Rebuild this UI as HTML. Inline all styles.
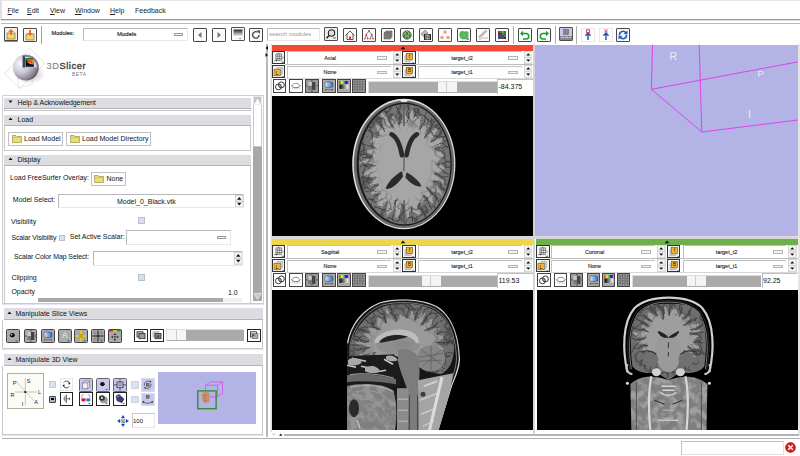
<!DOCTYPE html>
<html><head><meta charset="utf-8">
<style>
*{margin:0;padding:0;box-sizing:border-box}
html,body{width:800px;height:456px;overflow:hidden;background:#fff;font-family:"Liberation Sans",sans-serif;color:#000}
.a{position:absolute}
.t{position:absolute;font-size:7px;white-space:nowrap;line-height:1}
.btn{position:absolute;width:14px;height:14px;border:1px solid #222;background:#f4f4f4}
.hdr{position:absolute;background:#dddde1;border-bottom:1px solid #b4b4b8}
.frm{position:absolute;border:1px solid #c8c8c8;background:#fff}
.combo{position:absolute;border:1px solid #b8b8b8;border-right-color:#e8e8e8;border-bottom-color:#e8e8e8;background:#fff}
.hdl{position:absolute;width:9px;height:3.4px;border:0.8px solid #999;background:#f4f4f4;border-radius:0.5px}
.spin{position:absolute;width:7px}
.black{position:absolute;background:#000}
</style></head><body>
<!-- window borders -->
<div class="a" style="left:0;top:0;width:800px;height:1px;background:#e6e6e6"></div>
<div class="a" style="left:0;top:0;width:1.5px;height:20px;background:#e0e0e0"></div>
<!-- menu -->
<div class="t" style="left:7.5px;top:6.5px;color:#222"><u style="text-decoration-thickness:0.5px;text-underline-offset:1px">F</u>ile</div>
<div class="t" style="left:27px;top:6.5px;color:#222"><u style="text-decoration-thickness:0.5px;text-underline-offset:1px">E</u>dit</div>
<div class="t" style="left:50px;top:6.5px;color:#222"><u style="text-decoration-thickness:0.5px;text-underline-offset:1px">V</u>iew</div>
<div class="t" style="left:75px;top:6.5px;color:#222"><u style="text-decoration-thickness:0.5px;text-underline-offset:1px">W</u>indow</div>
<div class="t" style="left:110px;top:6.5px;color:#222"><u style="text-decoration-thickness:0.5px;text-underline-offset:1px">H</u>elp</div>
<div class="t" style="left:135px;top:6.5px;color:#222">Feedback</div>
<div class="a" style="left:1px;top:19px;width:799px;height:1px;background:#9a9a9a"></div>
<div class="a" style="left:1px;top:20px;width:799px;height:1px;background:#dcdcdc"></div>
<div class="a" style="left:1px;top:23px;width:799px;height:1px;background:#b8b8b8"></div>


<!-- toolbar -->
<div class="a" style="left:4px;top:27px;width:14px;height:14px;border:1px solid #484848;border-radius:1px;background:#f0f0f0;box-shadow:0 1px 0 #888"><svg width="12" height="12" viewBox="0 0 12 12" style="position:absolute;left:0;top:0"><rect x="2" y="5" width="8" height="6" fill="#f2d77a" stroke="#8a7030" stroke-width="0.7"/><path d="M6 1 L9 4 H7 V7 H5 V4 H3 Z" fill="#f07020"/></svg></div>
<div class="a" style="left:23px;top:28px;width:14px;height:14px;border:1px solid #484848;border-radius:1px;background:#f8f8f8"><svg width="12" height="12" viewBox="0 0 12 12" style="position:absolute;left:0;top:0"><rect x="2" y="5" width="8" height="6" fill="#f2d77a" stroke="#8a7030" stroke-width="0.7"/><path d="M6 7 L9 4 H7 V1 H5 V4 H3 Z" fill="#f07020"/></svg></div>
<div class="a" style="left:40.5px;top:25.5px;width:1px;height:18px;background:#a0a0a0"></div>
<div class="t" style="left:51.5px;top:31.3px;font-size:5.6px;color:#222;-webkit-text-stroke:0.15px #222">Modules:</div>
<div class="combo" style="left:82.5px;top:27.5px;width:105px;height:13.5px"></div>
<div class="t" style="left:117px;top:31px;font-size:6px;color:#222;-webkit-text-stroke:0.15px #222">Models</div>
<div class="hdl" style="left:174px;top:33px"></div>
<div class="a" style="left:193px;top:28px;width:14px;height:14px;border:1px solid #484848;border-radius:1px;background:#fafafa"><svg width="12" height="12" viewBox="0 0 12 12" style="position:absolute;left:0;top:0"><path d="M7.5 3 L4 6 L7.5 9 Z" fill="#777"/></svg></div>
<div class="a" style="left:212px;top:28px;width:14px;height:14px;border:1px solid #484848;border-radius:1px;background:#fafafa"><svg width="12" height="12" viewBox="0 0 12 12" style="position:absolute;left:0;top:0"><path d="M4.5 3 L8 6 L4.5 9 Z" fill="#777"/></svg></div>
<div class="a" style="left:230.5px;top:27.3px;width:14px;height:14px;border:1px solid #505050;border-radius:1px;background:#fafafa"><svg width="12" height="12" viewBox="0 0 12 12" style="position:absolute;left:0;top:0"><defs><linearGradient id="g1" x1="0" y1="0" x2="0" y2="1"><stop offset="0" stop-color="#222"/><stop offset="1" stop-color="#fff"/></linearGradient></defs><rect x="1.5" y="1.5" width="9" height="7" fill="url(#g1)"/><path d="M7 10 L9 10 L8 11 Z" fill="#333"/></svg></div>
<div class="a" style="left:249px;top:28px;width:14px;height:14px;border:1px solid #484848;border-radius:1px;background:#fafafa"><svg width="12" height="12" viewBox="0 0 12 12" style="position:absolute;left:0;top:0"><path d="M9 6 A3.2 3.2 0 1 1 7.5 3.2" fill="none" stroke="#444" stroke-width="1.3"/><path d="M6.5 1.5 L10 1.5 L10 5 Z" fill="#444"/></svg></div>
<div class="combo" style="left:267px;top:27.5px;width:52.5px;height:13.5px"></div><div class="t" style="left:269px;top:31px;font-size:6px;color:#9a9a9a">search modules</div>
<div class="a" style="left:324px;top:27.3px;width:14px;height:14px;border:1px solid #505050;border-radius:1px;background:#f0f0f0"><svg width="12" height="12" viewBox="0 0 12 12" style="position:absolute;left:0;top:0"><circle cx="6.5" cy="5" r="3.2" fill="#ddd" stroke="#222" stroke-width="1.1"/><path d="M4.3 7.3 L1.5 10.2" stroke="#222" stroke-width="1.6"/><path d="M8 10 H11" stroke="#444" stroke-width="0.8"/></svg></div>
<div class="a" style="left:343px;top:28px;width:14px;height:14px;border:1px solid #484848;border-radius:1px;background:#fafafa"><svg width="12" height="12" viewBox="0 0 12 12" style="position:absolute;left:0;top:0"><path d="M1.5 6.5 L6 2 L10.5 6.5 M3 5 V10.5 H9 V5" fill="none" stroke="#333" stroke-width="0.8"/><rect x="5.2" y="7.5" width="1.8" height="3" fill="#e02010"/></svg></div>
<div class="a" style="left:362px;top:28px;width:14px;height:14px;border:1px solid #484848;border-radius:1px;background:#fafafa"><svg width="12" height="12" viewBox="0 0 12 12" style="position:absolute;left:0;top:0"><path d="M6 1.8 L3.2 5.8 L1.8 9.8 M3.2 5.8 L4.8 9.8 M6 1.8 L8.8 5.8 L7.2 9.8 M8.8 5.8 L10.2 9.8" fill="none" stroke="#444" stroke-width="0.6"/><g fill="#c01a10"><circle cx="6" cy="1.8" r="0.7"/><circle cx="3.2" cy="5.8" r="0.7"/><circle cx="8.8" cy="5.8" r="0.7"/><circle cx="1.8" cy="9.8" r="0.7"/><circle cx="4.8" cy="9.8" r="0.7"/><circle cx="7.2" cy="9.8" r="0.7"/><circle cx="10.2" cy="9.8" r="0.7"/></g></svg></div>
<div class="a" style="left:381px;top:28px;width:14px;height:14px;border:1px solid #484848;border-radius:1px;background:#fafafa"><svg width="12" height="12" viewBox="0 0 12 12" style="position:absolute;left:0;top:0"><path d="M2 4 L4 2 H10 V8 L8 10 H2 Z" fill="#999" stroke="#444" stroke-width="0.5"/><path d="M2 4 H8 V10 M8 4 L10 2" stroke="#333" stroke-width="0.5" fill="none"/><path d="M4 4 V10 M6 4 V10 M2 6 H8 M2 8 H8 M8 6 L10 4 M8 8 L10 6 M4 4 L6 2 M6 4 L8 2" stroke="#444" stroke-width="0.4"/></svg></div>
<div class="a" style="left:400px;top:28px;width:14px;height:14px;border:1px solid #484848;border-radius:1px;background:#fafafa"><svg width="12" height="12" viewBox="0 0 12 12" style="position:absolute;left:0;top:0"><circle cx="6" cy="6" r="4.3" fill="#4a7a40" stroke="#2a4a25" stroke-width="0.5"/><path d="M6 2 L8 4 L7 7 L5 7 L4 4 Z M2 6 L4 4 M10 6 L8 4 M5 7 L4 9.5 M7 7 L8 9.5" fill="none" stroke="#b8e0a8" stroke-width="0.6"/></svg></div>
<div class="a" style="left:419px;top:28px;width:14px;height:14px;border:1px solid #484848;border-radius:1px;background:#fafafa"><svg width="12" height="12" viewBox="0 0 12 12" style="position:absolute;left:0;top:0"><path d="M1 5 L5 1 L8 4 L4 8 Z" fill="#bbb" stroke="#555" stroke-width="0.5"/><rect x="4" y="5" width="7" height="6" fill="#222"/><path d="M5 6.5 H10 M5 8 H10 M5 9.5 H10 M6 5 V11 M7.5 5 V11 M9 5 V11" stroke="#ddd" stroke-width="0.5"/></svg></div>
<div class="a" style="left:437.5px;top:28px;width:14px;height:14px;border:1px solid #484848;border-radius:1px;background:#fafafa"><svg width="12" height="12" viewBox="0 0 12 12" style="position:absolute;left:0;top:0"><path d="M8.00 3.00 L4.00 3.00 M7.41 4.41 L4.59 1.59 M6.00 5.00 L6.00 1.00 M4.59 4.41 L7.41 1.59 M5.00 8.50 L1.00 8.50 M4.41 9.91 L1.59 7.09 M3.00 10.50 L3.00 6.50 M1.59 9.91 L4.41 7.09 M11.00 8.50 L7.00 8.50 M10.41 9.91 L7.59 7.09 M9.00 10.50 L9.00 6.50 M7.59 9.91 L10.41 7.09 " stroke="#f07a60" stroke-width="0.5" fill="none"/><g fill="none" stroke="#f07a60" stroke-width="0.4"><circle cx="6" cy="3" r="1"/><circle cx="3" cy="8.5" r="1"/><circle cx="9" cy="8.5" r="1"/></g></svg></div>
<div class="a" style="left:457px;top:28px;width:14px;height:14px;border:1px solid #484848;border-radius:1px;background:#fafafa"><svg width="12" height="12" viewBox="0 0 12 12" style="position:absolute;left:0;top:0"><path d="M2 4 C2 2 5 1.5 7 3 C9 1.5 11 3 10 5.5 C11 8 9 10.5 6 10 C3 10.5 1 8 2 4 Z" fill="#5cb85c" stroke="#2c8a30" stroke-width="0.4"/><path d="M8.5 10 H11" stroke="#333" stroke-width="1"/></svg></div>
<div class="a" style="left:476px;top:28px;width:14px;height:14px;border:1px solid #484848;border-radius:1px;background:#fafafa"><svg width="12" height="12" viewBox="0 0 12 12" style="position:absolute;left:0;top:0"><path d="M2 8.5 L9.5 1.5" stroke="#999" stroke-width="2"/><path d="M2 8.5 L9.5 1.5" stroke="#fff" stroke-width="0.6"/><path d="M2 10 C4 11 5 8 6.5 9 C8 10 9 8 11 9" fill="none" stroke="#f06080" stroke-width="0.6"/></svg></div>
<div class="a" style="left:495px;top:28px;width:14px;height:14px;border:1px solid #484848;border-radius:1px;background:#fafafa"><svg width="12" height="12" viewBox="0 0 12 12" style="position:absolute;left:0;top:0"><rect x="2" y="2" width="8" height="8" fill="#333"/><g opacity="0.9"><rect x="2" y="2" width="2" height="2" fill="#c02020"/><rect x="4" y="2" width="2" height="2" fill="#30a030"/><rect x="6" y="2" width="2" height="2" fill="#a0a020"/><rect x="8" y="2" width="2" height="2" fill="#208080"/><rect x="2" y="4" width="2" height="2" fill="#8020a0"/><rect x="4" y="4" width="2" height="2" fill="#2040c0"/><rect x="6" y="4" width="2" height="2" fill="#40a040"/><rect x="8" y="4" width="2" height="2" fill="#a04060"/><rect x="2" y="6" width="2" height="2" fill="#206060"/><rect x="4" y="6" width="2" height="2" fill="#a02080"/><rect x="6" y="6" width="2" height="2" fill="#2060a0"/><rect x="8" y="6" width="2" height="2" fill="#608020"/><rect x="2" y="8" width="2" height="2" fill="#4040a0"/><rect x="4" y="8" width="2" height="2" fill="#108040"/><rect x="6" y="8" width="2" height="2" fill="#a03030"/><rect x="8" y="8" width="2" height="2" fill="#303080"/></g></svg></div>
<div class="a" style="left:512.5px;top:25.5px;width:1px;height:18px;background:#b0b0b0"></div>
<div class="a" style="left:517.5px;top:28px;width:14px;height:14px;border:1px solid #484848;border-radius:1px;background:#fafafa"><svg width="12" height="12" viewBox="0 0 12 12" style="position:absolute;left:0;top:0"><path d="M3 4.5 H7 A2.7 2.7 0 0 1 7 10 H4" fill="none" stroke="#1aa02a" stroke-width="1.5"/><path d="M1 4.5 L4 1.8 L4 7.2 Z" fill="#1aa02a"/></svg></div>
<div class="a" style="left:537px;top:28px;width:14px;height:14px;border:1px solid #484848;border-radius:1px;background:#fafafa"><svg width="12" height="12" viewBox="0 0 12 12" style="position:absolute;left:0;top:0"><path d="M9 4.5 H5 A2.7 2.7 0 0 0 5 10 H8" fill="none" stroke="#1aa02a" stroke-width="1.5"/><path d="M11 4.5 L8 1.8 L8 7.2 Z" fill="#1aa02a"/></svg></div>
<div class="a" style="left:555px;top:25.5px;width:1px;height:18px;background:#b0b0b0"></div>
<div class="a" style="left:559px;top:27.3px;width:14px;height:14px;border:1px solid #505050;border-radius:1px;background:#c8c8ee"><svg width="12" height="12" viewBox="0 0 12 12" style="position:absolute;left:0;top:0"><rect x="0" y="0" width="12" height="8" fill="#c8c8ee"/><rect x="3.5" y="1.5" width="5" height="5" fill="#888" stroke="#555" stroke-width="0.5"/><rect x="0" y="8" width="12" height="4" fill="#888"/><path d="M1 9.5 H4 M5 9.5 H8 M9 9.5 H11" stroke="#eee" stroke-width="0.7"/></svg></div>
<div class="a" style="left:576px;top:25.5px;width:1px;height:18px;background:#b0b0b0"></div>
<div class="a" style="left:580.5px;top:28px;width:14px;height:14px;border:1px solid #e8e8e8;background:#fff"><svg width="12" height="12" viewBox="0 0 12 12" style="position:absolute;left:0;top:0"><path d="M6 4 V11 M3.5 6.8 L6 4 L8.5 6.8" fill="none" stroke="#1a50b0" stroke-width="1.4"/><rect x="4.5" y="0.8" width="3" height="2.6" fill="none" stroke="#e02020" stroke-width="0.8"/></svg></div>
<div class="a" style="left:598.5px;top:28px;width:14px;height:14px;border:1px solid #e8e8e8;background:#fff"><svg width="12" height="12" viewBox="0 0 12 12" style="position:absolute;left:0;top:0"><path d="M6 4 V11 M3.5 6.8 L6 4 L8.5 6.8" fill="none" stroke="#1a50b0" stroke-width="1.4"/><path d="M4 0.5 L8 3.5 M8 0.5 L4 3.5 M6 0.3 V3.5" stroke="#f03030" stroke-width="0.6"/></svg></div>
<div class="a" style="left:616px;top:28px;width:14px;height:14px;border:1px solid #484848;border-radius:1px;background:#fafafa"><svg width="12" height="12" viewBox="0 0 12 12" style="position:absolute;left:0;top:0"><path d="M2.5 6 A3.5 3.5 0 0 1 9 4" fill="none" stroke="#1a5ec0" stroke-width="1.6"/><path d="M9.5 6 A3.5 3.5 0 0 1 3 8" fill="none" stroke="#1a5ec0" stroke-width="1.6"/><path d="M10.5 1.5 L10.5 5.5 L6.5 5 Z" fill="#1a5ec0"/><path d="M1.5 10.5 L1.5 6.5 L5.5 7 Z" fill="#1a5ec0"/></svg></div>


<!-- logo -->
<svg class="a" style="left:0;top:44px" width="50" height="52" viewBox="0 44 50 52">
<defs>
<radialGradient id="sph" cx="0.3" cy="0.35" r="0.8"><stop offset="0" stop-color="#f8f8fc"/><stop offset="0.45" stop-color="#c8c8d8"/><stop offset="0.8" stop-color="#8a8090"/><stop offset="1" stop-color="#4a3030"/></radialGradient>
<radialGradient id="shd" cx="0.5" cy="0.5" r="0.5"><stop offset="0" stop-color="#000" stop-opacity="0.3"/><stop offset="1" stop-color="#000" stop-opacity="0"/></radialGradient>
<linearGradient id="core" x1="0" y1="0" x2="1" y2="1"><stop offset="0" stop-color="#30a040"/><stop offset="0.4" stop-color="#e05020"/><stop offset="0.7" stop-color="#f0c020"/><stop offset="1" stop-color="#2050c0"/></linearGradient>
</defs>
<path d="M4.5 73.5 L29.5 48 L45 63 L20 88.5 Z" fill="none" stroke="#c8c8c8" stroke-width="0.5"/>
<path d="M18.5 88 L16 58 L30 53 L32.5 84 Z" fill="none" stroke="#d0d0d0" stroke-width="0.4"/>
<ellipse cx="30" cy="74" rx="15" ry="10" fill="url(#shd)"/>
<circle cx="25.8" cy="67.6" r="12.9" fill="url(#sph)"/>
<path d="M23.6 54.9 A12.9 12.9 0 0 1 38.7 67.6 L23.6 67.6 Z" fill="#7a8298"/><path d="M22.6 55 L25 56.8 V67.6 H22.6 Z" fill="#3c4458"/>
<path d="M25 56.8 A11 11 0 0 1 36.8 67.6 L25 67.6 Z" fill="#d8d8e4"/>
<path d="M25.5 58 L33 58.5 L34 66.8 L25.5 66.8 Z" fill="#111"/>
<path d="M26 58.5 L33 59 L33.5 65 L28 63 Z" fill="url(#core)"/>
<path d="M26 58.5 L29.5 58.7 L28 61.5 Z" fill="#20a030"/>
<path d="M29 61 L32.5 60.5 L32 64 Z" fill="#e84020"/>
</svg>
<div class="t" style="left:46.5px;top:61.7px;font-size:9.3px;color:#777;letter-spacing:0.55px">3D<span style="color:#3a3a3a;-webkit-text-stroke:0.35px #3a3a3a">Slicer</span></div>
<div class="t" style="left:72px;top:72.6px;font-size:4.8px;color:#777;letter-spacing:0.6px">BETA</div>

<!-- left panel outer frame -->
<div class="a" style="left:2px;top:94.5px;width:262px;height:209px;border:1px solid #d0d0d0;border-bottom:1.5px solid #c8c8d8;background:#fff"></div>
<!-- help header -->
<div class="hdr" style="left:4px;top:98px;width:247px;height:11.2px"></div>
<div class="a" style="left:4px;top:109.2px;width:247px;height:2px;border:1px solid #c8c8c8;border-top:none"></div>
<div class="t" style="left:17.5px;top:99.3px;font-size:7px;color:#111;letter-spacing:-0.07px">Help &amp; Acknowledgement</div>
<svg class="a" style="left:8px;top:100px" width="5" height="4"><path d="M0.5 0.5 H4.5 L2.5 3 Z" fill="#111"/></svg>
<!-- load -->
<div class="hdr" style="left:4px;top:115px;width:247px;height:10.5px"></div>
<div class="t" style="left:17.5px;top:116.3px;font-size:7px;color:#111">Load</div>
<svg class="a" style="left:8px;top:117px" width="5" height="4"><path d="M0.5 3 H4.5 L2.5 0.5 Z" fill="#111"/></svg>
<div class="a" style="left:4px;top:125.5px;width:247px;height:25px;border:1px solid #c8c8c8;border-top:none"></div>
<div class="a" style="left:8px;top:131.5px;width:55px;height:14.5px;border:1px solid #c0c0c0;background:#fff"></div>
<div class="a" style="left:65.5px;top:131.5px;width:85px;height:14.5px;border:1px solid #c0c0c0;background:#fff"></div>
<svg class="a" style="left:11.5px;top:134px" width="10" height="9"><path d="M0.5 1.5 H4 L5 2.5 H9.5 V8.5 H0.5 Z" fill="#e8e070" stroke="#8a8040" stroke-width="0.6"/><path d="M0.5 3.5 H9.5" stroke="#b0a040" stroke-width="0.4"/></svg>
<div class="t" style="left:24px;top:135px;font-size:7px;color:#111">Load Model</div>
<svg class="a" style="left:69.5px;top:134px" width="10" height="9"><path d="M0.5 1.5 H4 L5 2.5 H9.5 V8.5 H0.5 Z" fill="#e8e070" stroke="#8a8040" stroke-width="0.6"/><path d="M0.5 3.5 H9.5" stroke="#b0a040" stroke-width="0.4"/></svg>
<div class="t" style="left:82px;top:135px;font-size:7px;color:#111">Load Model Directory</div>
<!-- display -->
<div class="hdr" style="left:4px;top:155px;width:247px;height:10.5px"></div>
<div class="t" style="left:17.5px;top:156.3px;font-size:7px;color:#111">Display</div>
<svg class="a" style="left:8px;top:157px" width="5" height="4"><path d="M0.5 3 H4.5 L2.5 0.5 Z" fill="#111"/></svg>
<div class="a" style="left:4px;top:165.5px;width:247px;height:137px;border:1px solid #c8c8c8;border-top:none;border-bottom:none"></div>
<div class="t" style="left:10px;top:173.7px;font-size:7px;color:#111">Load FreeSurfer Overlay:</div>
<div class="a" style="left:90.5px;top:171.5px;width:35.5px;height:14.5px;border:1px solid #c0c0c0;background:#fff"></div>
<svg class="a" style="left:94px;top:174px" width="10" height="9"><path d="M0.5 1.5 H4 L5 2.5 H9.5 V8.5 H0.5 Z" fill="#e8e070" stroke="#8a8040" stroke-width="0.6"/><path d="M0.5 3.5 H9.5" stroke="#b0a040" stroke-width="0.4"/></svg>
<div class="t" style="left:106.5px;top:174.5px;font-size:7px;color:#111">None</div>
<div class="t" style="left:12.8px;top:195.5px;font-size:7px;color:#111">Model Select:</div>
<div class="combo" style="left:57.5px;top:193.5px;width:186.5px;height:14.5px"></div>
<div class="t" style="left:117px;top:197.5px;font-size:7px;color:#111">Model_0_Black.vtk</div>
<div class="a" style="left:235px;top:194.5px;width:8.5px;height:12.5px;background:#e4e4e4"><svg width="8.5" height="12.5" style="position:absolute;left:0;top:0"><rect x="0.5" y="0.5" width="7.5" height="5.5" fill="#f8f8f8" stroke="#bbb" stroke-width="0.5"/><rect x="0.5" y="6.5" width="7.5" height="5.5" fill="#f8f8f8" stroke="#bbb" stroke-width="0.5"/><path d="M2 4.7 H6.5 L4.25 2 Z M2 7.8 H6.5 L4.25 10.5 Z" fill="#111"/></svg></div>
<div class="t" style="left:11px;top:217.6px;font-size:7px;color:#111">Visibility</div>
<div class="a" style="left:138px;top:217px;width:7px;height:7px;border:1px solid #b8c0d0;background:#d8e0f0"></div>
<div class="t" style="left:11.4px;top:233.5px;font-size:7px;color:#111;letter-spacing:-0.12px">Scalar Visibility</div>
<div class="a" style="left:58.5px;top:234.5px;width:6.5px;height:6.5px;border:1px solid #b8c0d0;background:#d8e0f0"></div>
<div class="t" style="left:69.8px;top:232.5px;font-size:7px;color:#111">Set Active Scalar:</div>
<div class="combo" style="left:125.5px;top:230px;width:105.5px;height:14.5px"></div>
<div class="hdl" style="left:216.5px;top:236px"></div>
<div class="t" style="left:14px;top:252.6px;font-size:7px;color:#111;letter-spacing:-0.1px">Scalar Color Map Select:</div>
<div class="combo" style="left:92.5px;top:251px;width:150px;height:14.5px"></div>
<div class="a" style="left:233.5px;top:252px;width:8.5px;height:12.5px;background:#e4e4e4"><svg width="8.5" height="12.5" style="position:absolute;left:0;top:0"><rect x="0.5" y="0.5" width="7.5" height="5.5" fill="#f8f8f8" stroke="#bbb" stroke-width="0.5"/><rect x="0.5" y="6.5" width="7.5" height="5.5" fill="#f8f8f8" stroke="#bbb" stroke-width="0.5"/><path d="M2 4.7 H6.5 L4.25 2 Z M2 7.8 H6.5 L4.25 10.5 Z" fill="#111"/></svg></div>
<div class="t" style="left:11.4px;top:273.6px;font-size:7px;color:#111">Clipping</div>
<div class="a" style="left:138px;top:273.5px;width:7px;height:7px;border:1px solid #b8c0d0;background:#d8e0f0"></div>
<div class="t" style="left:11.4px;top:287.6px;font-size:7px;color:#111">Opacity</div>
<div class="t" style="left:228px;top:289px;font-size:7px;color:#111">1.0</div>
<div class="a" style="left:37.5px;top:298px;width:204px;height:4px;background:#a8a8a8"></div>
<div class="a" style="left:223px;top:298px;width:19px;height:4px;background:#f0f0f0"></div>
<!-- scrollbar -->
<div class="a" style="left:252.5px;top:96px;width:9.5px;height:205px;background:#a8a8a8"></div>
<div class="a" style="left:252.5px;top:96px;width:9.5px;height:51px;background:#fff;border:1px solid #c8c8c8"></div>
<div class="a" style="left:252.5px;top:96px;width:9.5px;height:9px;background:#c4c4c4;border:0.5px solid #e8e8e8"></div><svg class="a" style="left:253px;top:96.5px" width="9" height="9"><path d="M1.5 7.3 H7.5 L4.5 1.8 Z" fill="#fff" stroke="#eee" stroke-width="0.5"/></svg>
<svg class="a" style="left:253px;top:292px" width="9" height="9"><path d="M1 1.5 H8 L4.5 7.5 Z" fill="#c8c8c8" stroke="#eee" stroke-width="0.7"/></svg>
<!-- splitter -->
<div class="a" style="left:266px;top:44px;width:1.8px;height:392.8px;background:#b8b8b8"></div>
<svg class="a" style="left:265px;top:46px" width="4" height="11"><path d="M3 0 V4 L0.5 2 Z M0.5 7 V11 L3 9 Z" fill="#111"/></svg>

<!-- manipulate slice views -->
<div class="a" style="left:2px;top:303.5px;width:262px;height:1.5px;background:#e4e4f4"></div>
<div class="hdr" style="left:4px;top:308px;width:259px;height:12px"></div>
<div class="t" style="left:15.5px;top:309.5px;font-size:7px;color:#111">Manipulate Slice Views</div>
<svg class="a" style="left:7px;top:311px" width="5" height="4"><path d="M0.5 3 H4.5 L2.5 0.5 Z" fill="#111"/></svg>
<div class="a" style="left:2px;top:320px;width:261px;height:29px;border:1px solid #c8c8c8;border-top:none"></div>
<div class="a" style="left:2px;top:349px;width:262px;height:1px;background:#e4e4f4"></div>
<!-- manipulate 3d view -->
<div class="hdr" style="left:4px;top:354px;width:259px;height:12px"></div>
<div class="t" style="left:15.5px;top:355.6px;font-size:7px;color:#111">Manipulate 3D View</div>
<svg class="a" style="left:7px;top:357px" width="5" height="4"><path d="M0.5 3 H4.5 L2.5 0.5 Z" fill="#111"/></svg>
<div class="a" style="left:2px;top:366px;width:261px;height:68.5px;border:1px solid #c8c8c8;border-top:none"></div>
<div class="a" style="left:2px;top:434.5px;width:262px;height:1px;background:#e4e4f4"></div>

<!-- manip slice buttons -->
<div class="a" style="left:6.1px;top:328.7px;width:13.6px;height:14px;border:1px solid #444;border-radius:1.5px;background:#aaa"><svg width="11.6" height="12" viewBox="0 0 12 12" preserveAspectRatio="none" style="position:absolute;left:0;top:0"><circle cx="5.5" cy="5.5" r="2.6" fill="#111"/><path d="M2.5 6.5 C4 8.5 7 8.5 8.5 6.5" stroke="#fff" stroke-width="0.8" fill="none"/><circle cx="4.7" cy="4.7" r="0.8" fill="#eee"/><path d="M8.5 10.5 H11 L9.75 11.5 Z" fill="#222"/></svg></div>
<div class="a" style="left:23.6px;top:328.7px;width:13.8px;height:14px;border:1px solid #444;border-radius:1.5px;background:#aaa"><svg width="11.8" height="12" viewBox="0 0 12 12" preserveAspectRatio="none" style="position:absolute;left:0;top:0"><rect x="2.5" y="2" width="3.5" height="4" fill="#ccc"/><rect x="6" y="2" width="3.5" height="8" fill="#444"/><rect x="2.5" y="6" width="3.5" height="4" fill="#777"/><path d="M6 0 V1.5 M6 10.5 V12 M0 6 H1.5 M10.5 6 H12" stroke="#111" stroke-width="0.6"/></svg></div>
<div class="a" style="left:41.1px;top:328.7px;width:13.9px;height:14px;border:1px solid #444;border-radius:1.5px;background:#aaa"><svg width="11.9" height="12" viewBox="0 0 12 12" preserveAspectRatio="none" style="position:absolute;left:0;top:0"><defs><linearGradient id="mg2" x1="0" x2="1"><stop offset="0" stop-color="#dde8f8"/><stop offset="1" stop-color="#2a70d0"/></linearGradient></defs><rect x="2" y="2" width="8" height="5.5" rx="1.5" fill="url(#mg2)" stroke="#334" stroke-width="0.5"/><path d="M2.5 9.8 H9.5" stroke="#822" stroke-width="0.6"/><circle cx="2.5" cy="9.8" r="0.6" fill="#822"/><circle cx="9.5" cy="9.8" r="0.6" fill="#822"/></svg></div>
<div class="a" style="left:58px;top:328.7px;width:13.6px;height:14px;border:1px solid #444;border-radius:1.5px;background:#aaa"><svg width="11.6" height="12" viewBox="0 0 12 12" preserveAspectRatio="none" style="position:absolute;left:0;top:0"><text x="6" y="8.5" font-size="8.5" font-family="Liberation Sans" text-anchor="middle" fill="#eee">A</text><path d="M8.5 10.5 H11 L9.75 11.5 Z" fill="#222"/></svg></div>
<div class="a" style="left:74.2px;top:328.7px;width:13.8px;height:14px;border:1px solid #444;border-radius:1.5px;background:#aaa"><svg width="11.8" height="12" viewBox="0 0 12 12" preserveAspectRatio="none" style="position:absolute;left:0;top:0"><path d="M6 0.5 V11.5 M0.5 6 H11.5" stroke="#f0d020" stroke-width="1.5"/><rect x="4" y="4" width="4" height="4" fill="#c8a800"/><path d="M8.5 10.5 H11 L9.75 11.5 Z" fill="#222"/></svg></div>
<div class="a" style="left:90.7px;top:328.7px;width:14px;height:14px;border:1px solid #444;border-radius:1.5px;background:#aaa"><svg width="12" height="12" viewBox="0 0 12 12" preserveAspectRatio="none" style="position:absolute;left:0;top:0"><path d="M6 0.5 V11.5 M0.5 6 H11.5" stroke="#111" stroke-width="1"/><path d="M3 0.5 V11.5 M9 0.5 V11.5 M0.5 3 H11.5 M0.5 9 H11.5" stroke="#777" stroke-width="0.5"/><path d="M8.5 10.5 H11 L9.75 11.5 Z" fill="#222"/></svg></div>
<div class="a" style="left:108.2px;top:328.7px;width:13.8px;height:14px;border:1px solid #444;border-radius:1.5px;background:#aaa"><svg width="11.8" height="12" viewBox="0 0 12 12" preserveAspectRatio="none" style="position:absolute;left:0;top:0"><rect x="0" y="0" width="4" height="1.5" fill="#d02020"/><rect x="4" y="0" width="4" height="1.5" fill="#e0c020"/><rect x="8" y="0" width="4" height="1.5" fill="#30a030"/><path d="M6 3 L7.5 5 H4.5 Z M6 11 L7.5 9 H4.5 Z M2 7 L4 5.5 V8.5 Z M10 7 L8 5.5 V8.5 Z" fill="#333"/><circle cx="6" cy="7" r="1.2" fill="#555"/></svg></div>
<div class="a" style="left:134px;top:329px;width:14px;height:12.5px;border:1px solid #222;border-radius:0.5px;background:#fff"><svg width="12" height="10.5" viewBox="0 0 12 12" preserveAspectRatio="none" style="position:absolute;left:0;top:0"><rect x="2" y="2" width="6" height="6" fill="#bbb" stroke="#222" stroke-width="0.8"/><rect x="4" y="4" width="6" height="6" fill="#999" stroke="#222" stroke-width="0.8"/></svg></div>
<div class="a" style="left:150px;top:329px;width:14px;height:12.5px;border:1px solid #222;border-radius:0.5px;background:#fff"><svg width="12" height="10.5" viewBox="0 0 12 12" preserveAspectRatio="none" style="position:absolute;left:0;top:0"><rect x="2" y="2" width="6" height="6" fill="#ccc" stroke="#999" stroke-width="0.6"/><rect x="4" y="4" width="6" height="6" fill="#888" stroke="#222" stroke-width="0.8"/><text x="7" y="9.2" font-size="4.5" font-family="Liberation Sans" text-anchor="middle" fill="#111">B</text></svg></div>
<div class="a" style="left:166px;top:329px;width:78px;height:12px;background:#aaa;border-left:1px solid #ddd;border-top:1px solid #ddd"></div>
<div class="a" style="left:167px;top:330px;width:9.5px;height:10px;background:#f6f6f6;border-right:0.5px solid #ccc"></div><div class="a" style="left:176.5px;top:330px;width:9.5px;height:10px;background:#f6f6f6"></div>
<div class="a" style="left:247px;top:329px;width:14px;height:12.5px;border:1px solid #222;border-radius:0.5px;background:#fff"><svg width="12" height="10.5" viewBox="0 0 12 12" preserveAspectRatio="none" style="position:absolute;left:0;top:0"><rect x="2.5" y="2" width="6" height="6" fill="#ddd" stroke="#222" stroke-width="0.8"/><rect x="4" y="4" width="6" height="6" fill="#aaa" stroke="#555" stroke-width="0.5"/><text x="5.5" y="7.5" font-size="4.5" font-family="Liberation Sans" text-anchor="middle" fill="#111">F</text></svg></div>
<!-- manip 3d -->
<div class="a" style="left:7.2px;top:373.2px;width:36.6px;height:36.3px;border:1px solid #b0b0a0;background:#fbfbf6"></div>
<svg class="a" style="left:7px;top:373px" width="37" height="37" viewBox="7 373 37 37">
<path d="M15 392 H37" stroke="#d0d0c0" stroke-width="1.3"/>
<path d="M25.3 378 V405" stroke="#c8c8b8" stroke-width="1"/>
<path d="M16 381 L34 401" stroke="#999" stroke-width="0.5"/>
<circle cx="25.3" cy="392" r="1.1" fill="#111"/>
<g font-family="Liberation Sans" font-size="5.5" fill="#222" text-anchor="middle">
<text x="14.5" y="384.5">P</text><text x="28.5" y="383">S</text><text x="39.5" y="394">L</text><text x="12.5" y="397">R</text><text x="22.5" y="405.5">I</text><text x="36" y="403.5">A</text>
</g></svg>
<div class="a" style="left:49.2px;top:381.3px;width:7.3px;height:7.2px;border:1px solid #c0c8d0;border-radius:1px;background:#d8e4f0"></div>
<div class="a" style="left:49.2px;top:395.5px;width:7.3px;height:7px;border:1px solid #444;border-radius:1px;background:#a8b8d0"><div class="a" style="left:1.3px;top:1.2px;width:2.7px;height:2.6px;background:#000"></div></div>
<div class="a" style="left:59.5px;top:378px;width:13px;height:13px;border:1px solid #e6e6e6;border-radius:0px;background:#fff"><svg width="11" height="11" viewBox="0 0 12 12" preserveAspectRatio="none" style="position:absolute;left:0;top:0"><path d="M3 4 A3.5 3.5 0 0 1 9.5 5 M9 8 A3.5 3.5 0 0 1 2.5 7" stroke="#333" stroke-width="0.9" fill="none"/><path d="M8.5 3 L10.5 5.5 L8 6 Z M3.5 9 L1.5 6.5 L4 6 Z" fill="#333"/></svg></div>
<div class="a" style="left:59.5px;top:392.3px;width:13px;height:13.5px;border:1px solid #222;border-radius:0px;background:#fff"><svg width="11" height="11.5" viewBox="0 0 12 12" preserveAspectRatio="none" style="position:absolute;left:0;top:0"><path d="M6 2 C3 4 3 8 6 10 Z" fill="none" stroke="#333" stroke-width="0.7"/><path d="M5 6 H10 M8.5 4.8 L10 6 L8.5 7.2" stroke="#333" stroke-width="0.7" fill="none"/><path d="M2 6 L5 4 V8 Z" fill="#888"/></svg></div>
<div class="a" style="left:79.4px;top:378.2px;width:13.7px;height:13.7px;border:1px solid #666;border-radius:1.5px;background:#c8c8f0"><svg width="11.7" height="11.7" viewBox="0 0 12 12" preserveAspectRatio="none" style="position:absolute;left:0;top:0"><path d="M2.5 4 L4.5 2 H10 V8 L8 10 H2.5 Z" fill="#f0f0f8" stroke="#555" stroke-width="0.6"/><path d="M2.5 4 H8 V10 M8 4 L10 2" stroke="#555" stroke-width="0.6" fill="none"/></svg></div>
<div class="a" style="left:96px;top:378.2px;width:13.8px;height:13.7px;border:1px solid #666;border-radius:1.5px;background:#c8c8f0"><svg width="11.8" height="11.7" viewBox="0 0 12 12" preserveAspectRatio="none" style="position:absolute;left:0;top:0"><circle cx="5.5" cy="5.5" r="2.4" fill="#111"/><path d="M3 6.5 C4.5 8.2 6.8 8.2 8.2 6.5" stroke="#fff" stroke-width="0.7" fill="none"/><path d="M8.5 10.5 H11 L9.75 11.5 Z" fill="#222"/></svg></div>
<div class="a" style="left:113.2px;top:378.2px;width:14px;height:13.7px;border:1px solid #666;border-radius:1.5px;background:#c8c8f0"><svg width="12" height="11.7" viewBox="0 0 12 12" preserveAspectRatio="none" style="position:absolute;left:0;top:0"><rect x="3" y="3" width="6" height="6" fill="none" stroke="#222" stroke-width="0.7"/><rect x="5" y="5" width="2" height="2" fill="#fff" stroke="#222" stroke-width="0.5"/><path d="M6 0 V3 M6 9 V12 M0 6 H3 M9 6 H12" stroke="#222" stroke-width="0.7"/></svg></div>
<div class="a" style="left:79.4px;top:392.4px;width:13.7px;height:13.8px;border:1px solid #222;border-radius:0px;background:#fff"><svg width="11.7" height="11.8" viewBox="0 0 12 12" preserveAspectRatio="none" style="position:absolute;left:0;top:0"><path d="M2 5 V3 C2 2 3 1.5 4 2 M10 5 V3 C10 2 9 1.5 8 2" stroke="#444" stroke-width="0.5" fill="none"/><rect x="1.5" y="5.5" width="4" height="3" fill="#e01030"/><rect x="6.5" y="5.5" width="4" height="3" fill="#2080c0"/><path d="M5.5 6.5 H6.5" stroke="#333" stroke-width="0.5"/><path d="M8.5 10.5 H11 L9.75 11.5 Z" fill="#222"/></svg></div>
<div class="a" style="left:96px;top:392.4px;width:13.8px;height:13.8px;border:1px solid #222;border-radius:0px;background:#fff"><svg width="11.8" height="11.8" viewBox="0 0 12 12" preserveAspectRatio="none" style="position:absolute;left:0;top:0"><ellipse cx="7" cy="7" rx="4" ry="3.5" fill="#999"/><ellipse cx="5" cy="5" rx="3" ry="2.8" fill="#333"/><circle cx="5" cy="5" r="1.2" fill="#ccc"/><path d="M8.5 10.5 H11 L9.75 11.5 Z" fill="#222"/></svg></div>
<div class="a" style="left:113.2px;top:392.4px;width:14px;height:13.8px;border:1px solid #222;border-radius:0px;background:#fff"><svg width="12" height="11.8" viewBox="0 0 12 12" preserveAspectRatio="none" style="position:absolute;left:0;top:0"><path d="M2 3 L5 1.5 L10 6 L8 10 L3 8 Z" fill="#3a3a7a" stroke="#223" stroke-width="0.5"/><circle cx="4" cy="3.5" r="0.6" fill="#ddd"/><path d="M8.5 10.5 H11 L9.75 11.5 Z" fill="#222"/></svg></div>
<div class="a" style="left:131px;top:381.3px;width:7.5px;height:7.5px;border:1px solid #c8d0d8;border-radius:1px;background:#d8e4f0"></div>
<div class="a" style="left:131px;top:395.5px;width:7.5px;height:7px;border:1px solid #c8d0d8;border-radius:1px;background:#d8e4f0"></div>
<div class="a" style="left:141.2px;top:378px;width:13.4px;height:13.5px;border:1px solid #dcdcf0;border-radius:0px;background:#c8c8ee"><svg width="11.4" height="11.5" viewBox="0 0 12 12" preserveAspectRatio="none" style="position:absolute;left:0;top:0"><path d="M2.5 7 A4 4 0 0 1 8 2.5 M9.5 5 A4 4 0 0 1 4 9.5" stroke="#444" stroke-width="0.8" fill="none"/><rect x="4.5" y="4.5" width="3" height="3" fill="#777" stroke="#333" stroke-width="0.4"/><path d="M8 1.5 L10 2.5 L8.5 4 Z M4 10.5 L2 9.5 L3.5 8 Z" fill="#222"/></svg></div>
<div class="a" style="left:141.2px;top:393px;width:13.4px;height:13.2px;border:1px solid #dcdcf0;border-radius:0px;background:#c8c8ee"><svg width="11.4" height="11.2" viewBox="0 0 12 12" preserveAspectRatio="none" style="position:absolute;left:0;top:0"><rect x="4.5" y="1.5" width="3" height="3" fill="#777" stroke="#333" stroke-width="0.4"/><path d="M1.5 8 C3 10.5 9 10.5 10.5 8" stroke="#444" stroke-width="0.8" fill="none"/><path d="M1 7 L2.5 9.5 L0.5 9.5 Z M11 7 L9.5 9.5 L11.5 9.5 Z" fill="#222"/></svg></div>
<svg class="a" style="left:116px;top:414px" width="14" height="14" viewBox="0 0 14 14"><path d="M7 1 L9 4 H5 Z M7 13 L9 10 H5 Z M1 7 L4 5 V9 Z M13 7 L10 5 V9 Z" fill="#2050c0"/><circle cx="7" cy="7" r="2.3" fill="#ddd" stroke="#555" stroke-width="0.5"/><text x="7" y="8.5" font-size="3.5" font-family="Liberation Sans" text-anchor="middle" fill="#222">%</text></svg>
<div class="a" style="left:131.5px;top:412.7px;width:23px;height:15.6px;border:1px solid #c8c8c8;border-right-color:#e8e8e8;border-bottom-color:#e8e8e8;background:#fff"></div>
<div class="t" style="left:133px;top:417.5px;font-size:6px;color:#111">100</div>
<div class="a" style="left:157.5px;top:371.7px;width:98.5px;height:52.6px;background:#b3b3e6"></div>
<svg class="a" style="left:157.5px;top:371.7px" width="99" height="53" viewBox="157.5 371.7 99 53">
<g stroke="#e040f0" stroke-width="0.7" fill="none">
<path d="M205 385 L210 381.5 H222 V393 L217 396.5 H205 Z M205 385 H217 V396.5 M217 385 L222 381.5"/>
</g>
<rect x="197.3" y="390.6" width="18.3" height="17.8" fill="none" stroke="#2a8a2a" stroke-width="1.3"/>
<path d="M201 395 C201 392 204 391 207 391.5 L209 393 V401 C208 403 203 403 202 401 Z" fill="#c89070"/>
<path d="M203 395 H206 M203.5 398 H206 M204 400.5 H206" stroke="#7a4a30" stroke-width="0.5"/>
</svg>

<!-- slice views frames -->
<div class="a" style="left:532.5px;top:44px;width:2.8px;height:390px;background:#d4d4d4"></div>
<div class="a" style="left:269.5px;top:236px;width:528.3px;height:2.7px;background:#d8d8d8"></div>
<div class="a" style="left:797.8px;top:44px;width:2.2px;height:392px;background:#e4e4e4"></div>

<div class="black" style="left:272px;top:95.7px;width:260.5px;height:140.3px"></div>
<div class="a" style="left:535.2px;top:44.7px;width:262.6px;height:191.2px;background:#b3b3e6"></div>
<div class="black" style="left:272px;top:289.8px;width:260.5px;height:140.2px"></div>
<div class="black" style="left:536.6px;top:289.8px;width:261px;height:140px"></div>


<svg class="a" style="left:535px;top:44px" width="263" height="192" viewBox="535 44 263 192">
<g stroke="#e040f0" stroke-width="1" fill="none">
<path d="M652.5 44.8 L651.4 89.3 L797.8 61.9"/>
<path d="M651.4 89.3 L701.8 132 L797.8 120"/>
<path d="M699.2 44.8 L701.8 132"/>
</g>
<g font-family="Liberation Sans" fill="#ececf8" text-anchor="middle">
<text x="673.4" y="60" font-size="10.5">R</text>
<text x="760.7" y="76.7" font-size="9.3">P</text>
<text x="749.4" y="117.9" font-size="10.8">I</text>
</g>
</svg>









<svg class="a" id="axsvg" style="left:272px;top:95.7px" width="260.5" height="140.3" viewBox="272 95.7 260.5 140.3">
<defs>
<filter id="bl" x="-10%" y="-10%" width="120%" height="120%"><feGaussianBlur stdDeviation="0.5"/></filter>
<filter id="dsp" x="-10%" y="-10%" width="120%" height="120%"><feTurbulence type="fractalNoise" baseFrequency="0.1" numOctaves="2" seed="7" result="n"/><feDisplacementMap in="SourceGraphic" in2="n" scale="6" xChannelSelector="R" yChannelSelector="G"/></filter>
<filter id="crs" x="0" y="0" width="100%" height="100%"><feTurbulence type="turbulence" baseFrequency="0.11" numOctaves="1" seed="12" result="n"/><feColorMatrix in="n" type="matrix" values="0 0 0 0 0  0 0 0 0 0  0 0 0 0 0  -8 0 0 0 1.05" result="a"/><feGaussianBlur in="a" stdDeviation="0.7" result="ab"/><feComposite in="SourceGraphic" in2="ab" operator="in"/></filter>
<radialGradient id="ringm" cx="0.5" cy="0.5" r="0.5"><stop offset="0.55" stop-color="#fff" stop-opacity="0"/><stop offset="0.85" stop-color="#fff" stop-opacity="0.9"/><stop offset="1" stop-color="#fff" stop-opacity="1"/></radialGradient>
<mask id="axm" maskUnits="userSpaceOnUse" x="355" y="100" width="100" height="130"><ellipse cx="404.6" cy="163.8" rx="45.6" ry="60" fill="url(#ringm)"/></mask>
<clipPath id="axc"><ellipse cx="404.6" cy="163.8" rx="45.6" ry="60"/></clipPath>
</defs>
<g filter="url(#bl)">
<ellipse cx="403.8" cy="163.7" rx="51.6" ry="65.2" fill="#dedede"/>
<ellipse cx="404" cy="163.9" rx="50.2" ry="63.8" fill="#6a6a6a"/>
<ellipse cx="404.2" cy="163.8" rx="47.6" ry="61.6" fill="#1e1e1e"/>
<ellipse cx="404.6" cy="163.8" rx="45.8" ry="60.2" fill="#747474"/>
<g clip-path="url(#axc)"><g filter="url(#dsp)">
<path d="M436.22 163.80 L436.44 164.18 L436.84 164.56 L437.40 164.96 L438.12 165.38 L438.97 165.83 L439.91 166.30 L440.91 166.81 L441.88 167.33 L442.77 167.87 L443.51 168.41 L444.02 168.94 L444.25 169.44 L444.16 169.90 L443.74 170.31 L442.98 170.64 L441.92 170.90 L440.64 171.09 L439.21 171.22 L437.74 171.31 L436.34 171.38 L435.13 171.46 L434.21 171.59 L433.65 171.81 L433.51 172.12 L433.81 172.57 L434.53 173.16 L435.61 173.89 L436.97 174.74 L438.52 175.69 L440.13 176.70 L441.68 177.74 L443.06 178.75 L444.18 179.69 L444.97 180.53 L445.37 181.23 L445.38 181.77 L445.00 182.13 L444.28 182.33 L443.26 182.37 L442.04 182.29 L440.67 182.10 L439.26 181.86 L437.88 181.59 L436.60 181.35 L435.49 181.17 L434.60 181.09 L433.95 181.13 L433.58 181.32 L433.47 181.68 L433.63 182.20 L434.04 182.88 L434.65 183.73 L435.45 184.71 L436.36 185.81 L437.35 186.99 L438.36 188.22 L439.34 189.47 L440.23 190.68 L440.98 191.82 L441.54 192.84 L441.87 193.70 L441.96 194.38 L441.77 194.83 L441.29 195.05 L440.54 195.02 L439.53 194.73 L438.29 194.22 L436.86 193.49 L435.30 192.60 L433.68 191.60 L432.05 190.54 L430.49 189.50 L429.08 188.55 L427.87 187.77 L426.93 187.23 L426.29 186.98 L425.99 187.08 L426.03 187.56 L426.40 188.41 L427.07 189.63 L427.97 191.16 L429.04 192.93 L430.20 194.86 L431.34 196.84 L432.39 198.76 L433.24 200.49 L433.84 201.92 L434.11 202.98 L434.03 203.58 L433.60 203.71 L432.84 203.36 L431.79 202.59 L430.53 201.46 L429.14 200.10 L427.72 198.62 L426.36 197.17 L425.14 195.88 L424.14 194.88 L423.39 194.24 L422.92 194.03 L422.73 194.26 L422.78 194.92 L423.03 195.94 L423.41 197.24 L423.87 198.71 L424.34 200.24 L424.76 201.72 L425.08 203.06 L425.26 204.19 L425.30 205.05 L425.18 205.63 L424.91 205.92 L424.52 205.94 L424.03 205.73 L423.47 205.35 L422.86 204.85 L422.24 204.28 L421.63 203.71 L421.06 203.19 L420.54 202.78 L420.09 202.50 L419.72 202.40 L419.43 202.51 L419.22 202.84 L419.09 203.40 L419.04 204.17 L419.04 205.14 L419.09 206.27 L419.16 207.52 L419.23 208.83 L419.28 210.14 L419.30 211.39 L419.26 212.51 L419.15 213.45 L418.96 214.16 L418.70 214.60 L418.35 214.75 L417.92 214.62 L417.43 214.22 L416.89 213.57 L416.31 212.72 L415.71 211.71 L415.11 210.62 L414.52 209.50 L413.96 208.41 L413.43 207.42 L412.95 206.58 L412.52 205.93 L412.14 205.51 L411.80 205.34 L411.52 205.42 L411.28 205.76 L411.07 206.34 L410.88 207.15 L410.71 208.13 L410.55 209.26 L410.38 210.49 L410.21 211.77 L410.01 213.06 L409.80 214.29 L409.56 215.44 L409.29 216.45 L409.00 217.29 L408.68 217.93 L408.33 218.35 L407.97 218.53 L407.59 218.45 L407.20 218.13 L406.80 217.56 L406.41 216.77 L406.02 215.77 L405.64 214.59 L405.28 213.28 L404.93 211.86 L404.60 210.39 L404.29 208.93 L404.00 207.52 L403.73 206.22 L403.47 205.11 L403.22 204.22 L402.97 203.63 L402.71 203.36 L402.43 203.45 L402.13 203.92 L401.80 204.75 L401.43 205.94 L401.02 207.41 L400.56 209.11 L400.07 210.94 L399.56 212.77 L399.03 214.50 L398.50 216.00 L397.99 217.14 L397.53 217.83 L397.13 217.99 L396.81 217.56 L396.58 216.56 L396.45 215.00 L396.42 212.98 L396.48 210.59 L396.62 207.99 L396.80 205.34 L396.99 202.79 L397.17 200.51 L397.29 198.65 L397.32 197.31 L397.24 196.57 L397.02 196.46 L396.66 196.98 L396.14 198.07 L395.48 199.64 L394.69 201.59 L393.81 203.78 L392.87 206.08 L391.90 208.33 L390.93 210.43 L390.02 212.26 L389.18 213.74 L388.44 214.81 L387.82 215.44 L387.34 215.64 L387.00 215.41 L386.78 214.81 L386.68 213.89 L386.69 212.72 L386.79 211.38 L386.94 209.92 L387.13 208.42 L387.33 206.95 L387.52 205.56 L387.69 204.28 L387.80 203.16 L387.86 202.22 L387.85 201.46 L387.76 200.89 L387.59 200.50 L387.35 200.29 L387.03 200.23 L386.64 200.32 L386.18 200.52 L385.66 200.83 L385.09 201.21 L384.48 201.64 L383.84 202.12 L383.17 202.61 L382.48 203.11 L381.79 203.59 L381.10 204.03 L380.43 204.43 L379.78 204.75 L379.17 204.99 L378.62 205.12 L378.13 205.13 L377.73 205.00 L377.43 204.72 L377.24 204.26 L377.17 203.64 L377.22 202.86 L377.40 201.91 L377.69 200.83 L378.09 199.64 L378.55 198.38 L379.07 197.10 L379.58 195.84 L380.06 194.67 L380.44 193.65 L380.70 192.81 L380.78 192.20 L380.65 191.84 L380.29 191.74 L379.72 191.89 L378.93 192.25 L377.98 192.78 L376.90 193.40 L375.78 194.04 L374.69 194.61 L373.70 195.05 L372.88 195.28 L372.31 195.26 L372.01 194.95 L372.01 194.37 L372.30 193.52 L372.85 192.47 L373.60 191.26 L374.47 189.97 L375.40 188.67 L376.28 187.45 L377.04 186.36 L377.61 185.45 L377.95 184.75 L378.02 184.27 L377.83 184.00 L377.37 183.92 L376.70 183.98 L375.85 184.15 L374.89 184.38 L373.88 184.62 L372.88 184.83 L371.95 184.97 L371.13 185.01 L370.49 184.92 L370.03 184.71 L369.80 184.35 L369.78 183.87 L369.99 183.27 L370.39 182.56 L370.98 181.78 L371.70 180.94 L372.52 180.08 L373.37 179.22 L374.21 178.40 L374.97 177.64 L375.60 176.96 L376.03 176.39 L376.24 175.93 L376.17 175.58 L375.81 175.36 L375.15 175.24 L374.21 175.22 L373.01 175.27 L371.60 175.36 L370.04 175.48 L368.38 175.58 L366.73 175.64 L365.15 175.65 L363.73 175.57 L362.55 175.39 L361.68 175.10 L361.16 174.70 L361.03 174.20 L361.31 173.61 L361.99 172.94 L363.04 172.21 L364.39 171.45 L365.99 170.68 L367.75 169.93 L369.55 169.21 L371.30 168.54 L372.88 167.93 L374.20 167.40 L375.17 166.94 L375.72 166.53 L375.81 166.18 L375.42 165.87 L374.58 165.57 L373.32 165.28 L371.73 164.96 L369.89 164.62 L367.93 164.23 L365.98 163.80 L364.14 163.32 L362.56 162.81 L361.32 162.27 L360.51 161.72 L360.16 161.17 L360.31 160.66 L360.91 160.18 L361.92 159.76 L363.27 159.40 L364.84 159.09 L366.53 158.84 L368.21 158.62 L369.78 158.43 L371.14 158.24 L372.20 158.03 L372.92 157.77 L373.27 157.46 L373.24 157.07 L372.87 156.61 L372.20 156.06 L371.31 155.44 L370.27 154.76 L369.16 154.04 L368.09 153.29 L367.12 152.54 L366.34 151.83 L365.80 151.18 L365.54 150.61 L365.60 150.13 L365.96 149.77 L366.62 149.52 L367.53 149.39 L368.66 149.37 L369.92 149.42 L371.26 149.54 L372.59 149.69 L373.84 149.84 L374.95 149.95 L375.87 150.00 L376.55 149.95 L376.96 149.78 L377.10 149.48 L376.99 149.04 L376.63 148.46 L376.08 147.76 L375.37 146.95 L374.56 146.06 L373.70 145.11 L372.85 144.14 L372.05 143.18 L371.35 142.25 L370.78 141.38 L370.37 140.60 L370.13 139.91 L370.06 139.34 L370.16 138.89 L370.42 138.55 L370.82 138.32 L371.34 138.18 L371.95 138.14 L372.63 138.15 L373.35 138.22 L374.08 138.32 L374.80 138.42 L375.49 138.52 L376.13 138.59 L376.71 138.62 L377.22 138.60 L377.65 138.52 L378.01 138.38 L378.28 138.16 L378.48 137.87 L378.60 137.51 L378.66 137.08 L378.66 136.58 L378.60 136.01 L378.50 135.39 L378.36 134.71 L378.18 133.97 L377.97 133.18 L377.74 132.35 L377.49 131.49 L377.23 130.59 L376.98 129.67 L376.74 128.75 L376.52 127.84 L376.35 126.97 L376.25 126.16 L376.22 125.44 L376.30 124.85 L376.49 124.41 L376.81 124.16 L377.28 124.12 L377.89 124.30 L378.64 124.70 L379.50 125.31 L380.46 126.11 L381.48 127.03 L382.51 128.02 L383.50 128.99 L384.40 129.86 L385.17 130.53 L385.74 130.91 L386.10 130.93 L386.23 130.53 L386.12 129.69 L385.79 128.41 L385.27 126.74 L384.63 124.75 L383.91 122.55 L383.19 120.27 L382.54 118.06 L382.03 116.06 L381.71 114.41 L381.63 113.22 L381.82 112.59 L382.26 112.54 L382.96 113.09 L383.87 114.20 L384.96 115.77 L386.15 117.70 L387.39 119.85 L388.62 122.08 L389.79 124.24 L390.83 126.19 L391.73 127.81 L392.45 129.01 L392.98 129.74 L393.34 129.97 L393.52 129.70 L393.56 128.96 L393.49 127.83 L393.34 126.37 L393.14 124.68 L392.92 122.85 L392.72 120.97 L392.55 119.13 L392.44 117.42 L392.41 115.90 L392.46 114.63 L392.59 113.63 L392.80 112.94 L393.10 112.57 L393.47 112.51 L393.89 112.75 L394.37 113.27 L394.89 114.04 L395.44 115.02 L396.00 116.17 L396.56 117.44 L397.12 118.79 L397.66 120.17 L398.17 121.52 L398.65 122.79 L399.10 123.93 L399.51 124.90 L399.87 125.63 L400.19 126.11 L400.48 126.28 L400.72 126.12 L400.94 125.63 L401.13 124.80 L401.30 123.65 L401.47 122.21 L401.64 120.53 L401.82 118.68 L402.03 116.75 L402.26 114.81 L402.52 112.98 L402.81 111.36 L403.13 110.04 L403.48 109.11 L403.85 108.63 L404.22 108.64 L404.60 109.14 L404.97 110.12 L405.31 111.49 L405.64 113.17 L405.93 115.03 L406.20 116.92 L406.45 118.71 L406.68 120.24 L406.92 121.40 L407.17 122.09 L407.44 122.26 L407.75 121.91 L408.11 121.07 L408.52 119.83 L408.97 118.31 L409.45 116.65 L409.96 115.00 L410.48 113.49 L410.99 112.25 L411.46 111.37 L411.90 110.90 L412.28 110.85 L412.60 111.19 L412.87 111.85 L413.09 112.77 L413.27 113.85 L413.42 114.99 L413.56 116.10 L413.71 117.12 L413.88 117.98 L414.07 118.65 L414.30 119.11 L414.58 119.36 L414.90 119.41 L415.26 119.27 L415.67 118.97 L416.12 118.54 L416.60 118.01 L417.11 117.44 L417.62 116.86 L418.14 116.32 L418.64 115.87 L419.11 115.57 L419.54 115.44 L419.89 115.53 L420.17 115.87 L420.36 116.47 L420.45 117.33 L420.45 118.43 L420.36 119.72 L420.20 121.17 L419.99 122.69 L419.75 124.23 L419.52 125.70 L419.32 127.03 L419.18 128.15 L419.14 129.00 L419.22 129.54 L419.44 129.75 L419.80 129.63 L420.32 129.18 L420.99 128.44 L421.78 127.46 L422.69 126.30 L423.67 125.04 L424.69 123.75 L425.72 122.52 L426.70 121.42 L427.61 120.52 L428.39 119.89 L429.03 119.56 L429.49 119.57 L429.75 119.94 L429.80 120.65 L429.66 121.68 L429.33 123.00 L428.83 124.55 L428.20 126.27 L427.48 128.07 L426.71 129.90 L425.94 131.66 L425.24 133.28 L424.64 134.70 L424.19 135.85 L423.94 136.71 L423.91 137.23 L424.12 137.42 L424.58 137.28 L425.28 136.83 L426.21 136.12 L427.33 135.21 L428.59 134.15 L429.95 133.03 L431.35 131.91 L432.73 130.88 L434.01 129.99 L435.15 129.32 L436.08 128.90 L436.76 128.79 L437.17 128.99 L437.29 129.50 L437.11 130.31 L436.66 131.38 L435.97 132.66 L435.10 134.09 L434.11 135.59 L433.07 137.09 L432.08 138.51 L431.21 139.77 L430.54 140.82 L430.15 141.61 L430.07 142.11 L430.35 142.30 L430.99 142.20 L431.97 141.85 L433.24 141.28 L434.76 140.57 L436.43 139.79 L438.16 139.00 L439.86 138.29 L441.43 137.72 L442.78 137.35 L443.83 137.20 L444.55 137.31 L444.90 137.67 L444.87 138.28 L444.49 139.10 L443.80 140.09 L442.84 141.22 L441.70 142.42 L440.44 143.64 L439.15 144.85 L437.89 146.00 L436.74 147.06 L435.75 148.00 L434.97 148.80 L434.41 149.48 L434.10 150.02 L434.02 150.45 L434.18 150.77 L434.54 151.00 L435.07 151.17 L435.74 151.30 L436.50 151.40 L437.32 151.50 L438.16 151.61 L438.98 151.75 L439.75 151.93 L440.45 152.14 L441.06 152.40 L441.56 152.70 L441.95 153.04 L442.24 153.43 L442.41 153.85 L442.48 154.29 L442.45 154.76 L442.34 155.25 L442.15 155.75 L441.91 156.25 L441.61 156.76 L441.27 157.26 L440.90 157.77 L440.50 158.26 L440.09 158.75 L439.65 159.23 L439.20 159.70 L438.74 160.16 L438.29 160.61 L437.84 161.05 L437.41 161.47 L437.01 161.88 L436.66 162.28 L436.39 162.67 L436.21 163.05 L436.14 163.43 L436.22 163.80 Z" fill="#a6a6a6"/>
<path d="M448.23 177.86 L444.89 175.80 L441.24 175.48 L438.08 172.29 L434.41 172.23 M445.60 187.92 L442.52 187.19 L439.74 185.57 L437.49 182.43 L434.54 181.33 M439.58 200.87 L435.42 199.09 L432.57 195.25 L430.24 190.57 L426.36 188.36 M433.18 209.39 L429.93 206.64 L428.54 201.93 L426.40 197.99 L422.81 195.59 M425.60 216.04 L424.30 212.83 L421.38 210.68 L420.42 207.25 L420.29 203.28 M413.18 221.81 L413.67 217.76 L412.72 214.11 L413.12 210.07 L411.00 206.75 M401.17 222.73 L400.75 218.10 L401.24 213.57 L402.78 209.13 L402.84 204.56 M392.57 220.74 L393.83 215.02 L395.21 209.34 L395.96 203.44 L396.75 197.53 M382.16 215.00 L382.12 210.60 L384.32 208.00 L385.84 204.84 L386.43 200.93 M371.13 203.21 L373.63 201.00 L375.58 197.97 L377.49 194.87 L380.60 193.54 M365.17 192.10 L369.27 192.72 L371.22 188.53 L374.00 186.17 L377.69 185.84 M361.59 180.85 L365.31 180.82 L368.54 178.75 L372.31 178.80 L375.64 177.16 M359.84 168.76 L363.51 165.83 L367.40 167.88 L371.10 165.99 L374.88 165.33 M360.42 153.13 L363.21 155.81 L366.26 156.37 L369.36 156.48 L372.48 156.48 M362.43 143.46 L366.39 143.15 L369.78 144.82 L373.16 146.48 L375.95 150.16 M369.44 127.02 L370.35 131.59 L372.99 133.12 L375.62 134.71 L378.24 136.31 M377.55 116.62 L380.68 118.88 L381.82 123.03 L383.34 126.84 L385.30 130.23 M385.88 110.08 L387.32 114.98 L389.15 119.65 L391.79 123.84 L393.83 128.41 M397.32 105.48 L397.66 110.47 L400.38 115.01 L399.91 120.13 L400.22 125.12 M407.84 104.85 L408.51 108.99 L408.76 113.10 L407.64 117.03 L407.31 121.06 M416.25 106.72 L417.79 110.34 L415.06 112.29 L415.51 115.46 L415.60 118.52 M425.94 111.80 L425.56 116.87 L424.18 121.23 L421.78 124.79 L420.25 129.02 M434.98 120.27 L432.85 124.90 L429.61 128.16 L427.87 133.30 L424.34 136.16 M442.25 131.58 L440.11 135.54 L437.01 137.49 L434.24 140.14 L430.80 141.38 M447.07 144.56 L444.22 146.69 L440.97 147.29 L437.79 148.18 L434.83 149.88 M449.50 162.05 L446.40 162.93 L443.28 164.87 L440.16 164.70 L437.06 163.77" stroke="#404040" stroke-width="1" fill="none"/>
</g>
<rect x="355" y="100" width="100" height="130" fill="#3a3a3a" filter="url(#crs)" mask="url(#axm)" opacity="0.75"/>
</g>
<path d="M404 104 V126 M404 200 V223" stroke="#545454" stroke-width="1.4"/>
<path d="M391.5 134 Q399 138 402 155" stroke="#2c2c2c" stroke-width="4.6" fill="none" stroke-linecap="round"/>
<path d="M417 134 Q409.5 138 406.5 155" stroke="#2c2c2c" stroke-width="4.6" fill="none" stroke-linecap="round"/>
<path d="M402 171 C396 174 388 181 385.5 188.5 C391 189.5 398 184 403 176 Z" fill="#2c2c2c"/>
<path d="M406.5 172 C412 175 419 180 421.5 186 C416.5 187.5 410 183 405.5 177 Z" fill="#2e2e2e"/>
<path d="M404.2 156 L403.8 171" stroke="#555" stroke-width="1.2"/>
<ellipse cx="404" cy="100.5" rx="3.5" ry="1.3" fill="#e8e8e8"/>
</g>
</svg>














<svg class="a" id="sagsvg" style="left:272px;top:289.8px" width="260.5" height="140.2" viewBox="272 289.8 260.5 140.2">
<defs>
<filter id="bl2" x="-10%" y="-10%" width="120%" height="120%"><feGaussianBlur stdDeviation="0.55"/></filter>
<filter id="dsp2" x="-10%" y="-10%" width="120%" height="120%"><feTurbulence type="fractalNoise" baseFrequency="0.1" numOctaves="2" seed="9" result="n"/><feDisplacementMap in="SourceGraphic" in2="n" scale="6" xChannelSelector="R" yChannelSelector="G"/></filter>
<filter id="nz2" x="0" y="0" width="100%" height="100%"><feTurbulence type="fractalNoise" baseFrequency="0.14" numOctaves="2" seed="4" result="n"/><feColorMatrix in="n" type="matrix" values="0 0 0 0 0  0 0 0 0 0  0 0 0 0 0  0 0 0 -4 2.3" result="a"/><feComposite in="SourceGraphic" in2="a" operator="in"/><feGaussianBlur stdDeviation="0.5"/></filter>
<filter id="crs2" x="0" y="0" width="100%" height="100%"><feTurbulence type="turbulence" baseFrequency="0.11" numOctaves="1" seed="31" result="n"/><feColorMatrix in="n" type="matrix" values="0 0 0 0 0  0 0 0 0 0  0 0 0 0 0  -8 0 0 0 1.05" result="a"/><feGaussianBlur in="a" stdDeviation="0.7" result="ab"/><feComposite in="SourceGraphic" in2="ab" operator="in"/></filter>
<radialGradient id="ringm2" cx="0.5" cy="0.5" r="0.5"><stop offset="0.5" stop-color="#fff" stop-opacity="0"/><stop offset="0.8" stop-color="#fff" stop-opacity="0.9"/><stop offset="1" stop-color="#fff" stop-opacity="1"/></radialGradient>
<mask id="sagm" maskUnits="userSpaceOnUse" x="345" y="298" width="115" height="80"><ellipse cx="402" cy="346" rx="55" ry="46" fill="url(#ringm2)"/></mask>
<clipPath id="sagc"><path d="M347 343 C350 325 362 309 380 302 C395 297.5 420 297.5 437 306 C452 315 459 335 460 358 C460 368 456 376 452 386 L438 432 L347 432 Z"/></clipPath>
<clipPath id="cerc"><path d="M349 352 C352 332 365 313 384 306 C400 301.5 420 302 436 311 C449 320 455 336 454 350 C453 362 449 370 441 374 L426 371 C418 366 405 357 392 355 L349 357 Z"/></clipPath>
</defs>
<g filter="url(#bl2)">
<g clip-path="url(#sagc)">
<rect x="347" y="296" width="115" height="140" fill="#181818"/>
<path d="M347 343 C350 325 362 309 380 302 C395 297.5 420 297.5 437 306 C452 315 459 335 460 358 C460 368 456 376 452 386 L438 432" fill="none" stroke="#d4d4d4" stroke-width="2.4"/>
<path d="M349.8 347 C352.5 328 364 312.5 381.5 305 C396 301 419 301 435.5 309 C449 317.5 455.5 336 456.5 357 C456.5 367 453 376 449 386 L435.5 432" fill="none" stroke="#7a7a7a" stroke-width="1"/>
<g clip-path="url(#cerc)">
<rect x="347" y="300" width="110" height="76" fill="#6e6e6e"/>
<g filter="url(#dsp2)"><path d="M440.61 346.00 L441.21 346.29 L441.76 346.59 L442.25 346.90 L442.67 347.21 L443.00 347.52 L443.26 347.84 L443.43 348.16 L443.51 348.47 L443.49 348.78 L443.37 349.08 L443.16 349.37 L442.85 349.65 L442.44 349.92 L441.93 350.17 L441.32 350.40 L440.62 350.62 L439.83 350.81 L438.96 350.98 L438.02 351.13 L437.02 351.26 L436.00 351.36 L434.96 351.45 L433.95 351.53 L433.00 351.61 L432.13 351.69 L431.41 351.78 L430.85 351.90 L430.51 352.05 L430.42 352.26 L430.61 352.53 L431.08 352.87 L431.85 353.29 L432.90 353.80 L434.20 354.39 L435.70 355.06 L437.36 355.79 L439.07 356.57 L440.78 357.38 L442.37 358.19 L443.76 358.96 L444.87 359.67 L445.63 360.28 L445.97 360.78 L445.88 361.13 L445.35 361.32 L444.40 361.36 L443.07 361.24 L441.44 360.99 L439.59 360.63 L437.62 360.19 L435.64 359.70 L433.74 359.23 L432.02 358.79 L430.56 358.44 L429.42 358.20 L428.63 358.11 L428.22 358.18 L428.18 358.41 L428.47 358.81 L429.07 359.37 L429.90 360.07 L430.91 360.87 L432.04 361.76 L433.20 362.70 L434.34 363.65 L435.41 364.59 L436.35 365.49 L437.14 366.32 L437.74 367.07 L438.14 367.71 L438.34 368.25 L438.35 368.67 L438.17 368.99 L437.83 369.20 L437.34 369.31 L436.73 369.33 L436.02 369.27 L435.23 369.15 L434.39 368.98 L433.51 368.76 L432.62 368.52 L431.72 368.26 L430.84 367.99 L429.98 367.72 L429.15 367.46 L428.36 367.22 L427.63 367.00 L426.95 366.82 L426.34 366.68 L425.80 366.58 L425.33 366.54 L424.95 366.57 L424.65 366.67 L424.44 366.85 L424.31 367.12 L424.28 367.48 L424.33 367.92 L424.46 368.45 L424.65 369.06 L424.89 369.73 L425.15 370.46 L425.42 371.21 L425.68 371.95 L425.88 372.67 L426.01 373.33 L426.05 373.89 L425.96 374.33 L425.74 374.61 L425.37 374.71 L424.85 374.63 L424.20 374.36 L423.43 373.92 L422.56 373.33 L421.62 372.61 L420.66 371.83 L419.72 371.03 L418.83 370.28 L418.04 369.62 L417.36 369.11 L416.84 368.80 L416.46 368.71 L416.25 368.87 L416.17 369.26 L416.22 369.87 L416.37 370.67 L416.57 371.61 L416.80 372.63 L417.02 373.67 L417.19 374.68 L417.30 375.59 L417.31 376.37 L417.22 376.98 L417.03 377.39 L416.73 377.60 L416.35 377.61 L415.88 377.45 L415.36 377.13 L414.80 376.68 L414.21 376.15 L413.62 375.57 L413.04 374.98 L412.49 374.42 L411.97 373.92 L411.51 373.52 L411.09 373.25 L410.74 373.12 L410.43 373.17 L410.19 373.38 L409.99 373.78 L409.83 374.36 L409.70 375.09 L409.59 375.97 L409.49 376.97 L409.39 378.04 L409.28 379.16 L409.14 380.28 L408.97 381.35 L408.76 382.33 L408.50 383.18 L408.20 383.86 L407.86 384.34 L407.47 384.61 L407.05 384.64 L406.60 384.43 L406.13 383.99 L405.65 383.32 L405.17 382.46 L404.70 381.42 L404.23 380.26 L403.79 379.00 L403.38 377.69 L402.99 376.37 L402.63 375.10 L402.30 373.91 L402.00 372.84 L401.72 371.94 L401.45 371.22 L401.19 370.72 L400.94 370.45 L400.67 370.42 L400.39 370.63 L400.09 371.06 L399.76 371.71 L399.40 372.54 L399.00 373.53 L398.57 374.64 L398.10 375.82 L397.60 377.04 L397.07 378.24 L396.53 379.38 L395.98 380.42 L395.43 381.31 L394.90 382.03 L394.39 382.54 L393.92 382.83 L393.49 382.88 L393.12 382.70 L392.81 382.28 L392.56 381.66 L392.38 380.84 L392.26 379.87 L392.20 378.78 L392.18 377.62 L392.20 376.41 L392.25 375.22 L392.30 374.07 L392.35 373.00 L392.38 372.06 L392.37 371.27 L392.31 370.65 L392.19 370.22 L392.00 369.98 L391.72 369.94 L391.36 370.09 L390.92 370.42 L390.39 370.90 L389.78 371.52 L389.11 372.24 L388.38 373.02 L387.62 373.83 L386.84 374.62 L386.06 375.37 L385.31 376.03 L384.61 376.56 L383.98 376.95 L383.43 377.17 L382.98 377.22 L382.64 377.08 L382.41 376.77 L382.29 376.29 L382.28 375.67 L382.35 374.93 L382.51 374.11 L382.72 373.24 L382.96 372.35 L383.21 371.48 L383.45 370.65 L383.66 369.90 L383.81 369.24 L383.89 368.69 L383.88 368.26 L383.78 367.96 L383.58 367.78 L383.28 367.71 L382.89 367.75 L382.41 367.88 L381.85 368.09 L381.22 368.36 L380.54 368.67 L379.81 369.00 L379.06 369.35 L378.30 369.69 L377.54 370.01 L376.79 370.30 L376.06 370.55 L375.36 370.76 L374.70 370.92 L374.08 371.03 L373.51 371.09 L372.98 371.10 L372.50 371.06 L372.07 370.97 L371.69 370.84 L371.35 370.67 L371.06 370.46 L370.81 370.22 L370.60 369.95 L370.43 369.65 L370.30 369.32 L370.22 368.96 L370.19 368.57 L370.20 368.15 L370.27 367.71 L370.39 367.23 L370.56 366.73 L370.79 366.20 L371.08 365.65 L371.42 365.08 L371.80 364.49 L372.20 363.90 L372.61 363.33 L373.01 362.77 L373.36 362.25 L373.64 361.78 L373.82 361.38 L373.85 361.07 L373.70 360.85 L373.36 360.73 L372.80 360.72 L372.02 360.81 L371.03 360.99 L369.84 361.25 L368.49 361.56 L367.05 361.89 L365.59 362.20 L364.17 362.47 L362.90 362.66 L361.85 362.73 L361.11 362.66 L360.73 362.43 L360.78 362.04 L361.26 361.49 L362.16 360.79 L363.45 359.96 L365.06 359.06 L366.89 358.10 L368.83 357.14 L370.76 356.23 L372.56 355.39 L374.10 354.66 L375.29 354.07 L376.05 353.62 L376.33 353.32 L376.12 353.17 L375.44 353.14 L374.33 353.21 L372.86 353.35 L371.13 353.54 L369.24 353.74 L367.29 353.92 L365.38 354.07 L363.62 354.15 L362.07 354.16 L360.80 354.10 L359.86 353.95 L359.26 353.73 L359.01 353.45 L359.08 353.10 L359.46 352.71 L360.11 352.29 L360.97 351.84 L361.99 351.39 L363.13 350.94 L364.32 350.51 L365.53 350.09 L366.69 349.69 L367.77 349.32 L368.73 348.97 L369.54 348.66 L370.18 348.37 L370.62 348.10 L370.86 347.85 L370.87 347.62 L370.67 347.40 L370.25 347.18 L369.62 346.96 L368.79 346.74 L367.79 346.51 L366.63 346.26 L365.36 346.00 L364.00 345.72 L362.60 345.42 L361.21 345.09 L359.86 344.75 L358.61 344.39 L357.51 344.02 L356.59 343.64 L355.91 343.26 L355.49 342.89 L355.35 342.53 L355.52 342.19 L355.98 341.89 L356.73 341.61 L357.74 341.38 L358.97 341.18 L360.37 341.02 L361.86 340.90 L363.38 340.79 L364.85 340.71 L366.20 340.63 L367.36 340.54 L368.28 340.42 L368.91 340.27 L369.23 340.07 L369.22 339.81 L368.92 339.50 L368.35 339.12 L367.56 338.69 L366.63 338.21 L365.62 337.70 L364.61 337.17 L363.69 336.64 L362.90 336.13 L362.30 335.66 L361.93 335.23 L361.80 334.87 L361.92 334.57 L362.26 334.33 L362.79 334.16 L363.49 334.05 L364.29 333.98 L365.16 333.94 L366.06 333.92 L366.95 333.92 L367.79 333.91 L368.56 333.89 L369.25 333.84 L369.83 333.77 L370.31 333.67 L370.68 333.53 L370.93 333.34 L371.06 333.11 L371.08 332.83 L370.99 332.49 L370.80 332.11 L370.52 331.69 L370.16 331.22 L369.76 330.72 L369.34 330.19 L368.92 329.65 L368.53 329.12 L368.21 328.62 L367.98 328.15 L367.87 327.73 L367.91 327.39 L368.10 327.13 L368.45 326.96 L368.97 326.89 L369.63 326.92 L370.43 327.03 L371.35 327.24 L372.35 327.51 L373.41 327.83 L374.50 328.19 L375.57 328.57 L376.61 328.94 L377.57 329.29 L378.44 329.59 L379.20 329.82 L379.82 329.98 L380.29 330.03 L380.62 329.98 L380.78 329.82 L380.80 329.54 L380.68 329.14 L380.42 328.63 L380.05 328.01 L379.57 327.29 L379.02 326.48 L378.41 325.60 L377.77 324.66 L377.11 323.68 L376.46 322.68 L375.83 321.68 L375.26 320.69 L374.75 319.74 L374.33 318.84 L374.00 318.01 L373.78 317.27 L373.68 316.63 L373.70 316.11 L373.84 315.70 L374.11 315.43 L374.50 315.29 L375.01 315.28 L375.62 315.40 L376.33 315.66 L377.13 316.03 L377.99 316.51 L378.91 317.07 L379.86 317.71 L380.82 318.40 L381.77 319.11 L382.70 319.82 L383.57 320.49 L384.38 321.10 L385.10 321.62 L385.71 322.01 L386.21 322.25 L386.58 322.31 L386.82 322.17 L386.94 321.82 L386.93 321.27 L386.81 320.51 L386.60 319.56 L386.33 318.46 L386.01 317.23 L385.68 315.92 L385.36 314.60 L385.10 313.30 L384.92 312.11 L384.83 311.06 L384.87 310.22 L385.04 309.63 L385.35 309.31 L385.79 309.29 L386.36 309.56 L387.04 310.12 L387.80 310.93 L388.62 311.95 L389.48 313.14 L390.35 314.43 L391.20 315.77 L392.01 317.09 L392.76 318.32 L393.44 319.44 L394.04 320.38 L394.56 321.12 L395.00 321.63 L395.35 321.92 L395.65 321.99 L395.88 321.84 L396.07 321.50 L396.23 321.00 L396.38 320.37 L396.51 319.65 L396.65 318.87 L396.80 318.06 L396.98 317.27 L397.17 316.51 L397.39 315.80 L397.63 315.17 L397.90 314.63 L398.19 314.18 L398.50 313.83 L398.83 313.57 L399.16 313.40 L399.51 313.32 L399.87 313.30 L400.23 313.35 L400.59 313.46 L400.94 313.61 L401.30 313.79 L401.65 314.00 L402.00 314.23 L402.34 314.48 L402.68 314.74 L403.01 315.01 L403.33 315.29 L403.65 315.59 L403.96 315.89 L404.27 316.20 L404.56 316.51 L404.86 316.83 L405.14 317.14 L405.42 317.44 L405.70 317.71 L405.98 317.94 L406.26 318.11 L406.55 318.20 L406.86 318.20 L407.19 318.09 L407.55 317.85 L407.94 317.48 L408.37 316.97 L408.85 316.33 L409.36 315.56 L409.93 314.71 L410.52 313.79 L411.15 312.87 L411.78 311.98 L412.41 311.18 L413.01 310.54 L413.56 310.09 L414.05 309.90 L414.44 309.98 L414.74 310.35 L414.91 311.01 L414.98 311.92 L414.94 313.06 L414.82 314.34 L414.64 315.69 L414.44 317.03 L414.24 318.27 L414.11 319.33 L414.06 320.14 L414.14 320.65 L414.37 320.82 L414.77 320.67 L415.33 320.21 L416.05 319.48 L416.90 318.54 L417.85 317.48 L418.86 316.37 L419.89 315.29 L420.87 314.32 L421.78 313.53 L422.57 312.98 L423.22 312.68 L423.69 312.67 L423.98 312.94 L424.09 313.47 L424.02 314.24 L423.81 315.20 L423.46 316.30 L423.01 317.50 L422.51 318.74 L421.97 319.97 L421.45 321.15 L420.97 322.23 L420.58 323.18 L420.28 323.97 L420.12 324.57 L420.11 324.99 L420.27 325.21 L420.59 325.24 L421.08 325.08 L421.74 324.76 L422.54 324.30 L423.48 323.72 L424.53 323.06 L425.65 322.36 L426.83 321.63 L428.01 320.93 L429.17 320.29 L430.26 319.73 L431.26 319.29 L432.12 319.00 L432.82 318.86 L433.32 318.91 L433.62 319.14 L433.70 319.55 L433.55 320.14 L433.19 320.89 L432.62 321.79 L431.87 322.81 L430.97 323.91 L429.95 325.06 L428.87 326.23 L427.77 327.38 L426.70 328.47 L425.73 329.47 L424.89 330.34 L424.24 331.06 L423.82 331.61 L423.67 331.97 L423.79 332.15 L424.20 332.15 L424.89 331.98 L425.85 331.67 L427.04 331.24 L428.41 330.72 L429.92 330.16 L431.49 329.59 L433.06 329.05 L434.57 328.57 L435.95 328.18 L437.16 327.91 L438.15 327.77 L438.89 327.77 L439.37 327.91 L439.59 328.18 L439.56 328.56 L439.33 329.03 L438.91 329.57 L438.37 330.16 L437.75 330.77 L437.10 331.37 L436.47 331.96 L435.90 332.50 L435.43 332.99 L435.08 333.43 L434.86 333.80 L434.80 334.12 L434.89 334.38 L435.12 334.58 L435.50 334.74 L436.00 334.87 L436.61 334.96 L437.32 335.04 L438.10 335.10 L438.94 335.16 L439.79 335.22 L440.65 335.30 L441.47 335.39 L442.24 335.52 L442.92 335.67 L443.49 335.86 L443.93 336.10 L444.21 336.37 L444.32 336.68 L444.26 337.03 L444.02 337.41 L443.62 337.82 L443.07 338.25 L442.39 338.69 L441.60 339.14 L440.74 339.59 L439.85 340.03 L438.95 340.46 L438.07 340.86 L437.25 341.25 L436.51 341.61 L435.88 341.95 L435.36 342.26 L434.99 342.55 L434.75 342.83 L434.66 343.08 L434.70 343.32 L434.88 343.55 L435.18 343.78 L435.58 344.00 L436.08 344.23 L436.65 344.46 L437.27 344.69 L437.93 344.93 L438.61 345.18 L439.30 345.45 L439.97 345.72 L440.61 346.00 Z" fill="#9a9a9a"/><path d="M451.68 357.17 L446.48 356.39 L441.85 353.83 L436.62 353.18 L431.61 351.81 M446.37 367.58 L442.14 365.22 L438.52 361.94 L433.01 361.44 L428.66 359.24 M436.09 377.90 L433.41 375.25 L431.51 372.00 L428.89 369.29 L425.22 367.40 M427.05 383.19 L424.37 379.83 L421.92 376.36 L420.02 372.65 L416.92 369.47 M415.19 387.15 L413.02 384.08 L412.87 380.58 L411.56 377.33 L410.83 373.96 M399.34 388.51 L400.18 384.22 L400.83 379.91 L399.43 375.53 L399.81 371.22 M384.08 385.91 L386.15 382.18 L388.76 378.60 L390.51 374.78 L391.95 370.86 M373.63 381.52 L374.54 377.44 L377.98 374.82 L379.75 371.22 L383.20 368.60 M357.90 367.97 L361.69 366.38 L366.50 366.07 L369.72 363.76 L372.47 360.81 M353.34 359.90 L358.41 357.23 L364.41 356.89 L370.13 355.82 L375.28 353.40 M350.58 348.05 L355.48 349.04 L360.32 349.10 L365.07 348.29 L369.81 346.99 M351.91 336.16 L355.64 338.43 L359.85 338.84 L363.93 339.82 L368.06 340.56 M356.35 326.32 L359.07 329.13 L363.08 329.80 L366.49 331.46 L369.79 333.32 M364.45 316.88 L367.27 320.96 L372.18 323.12 L375.40 326.85 L379.83 329.44 M376.99 308.79 L379.31 311.97 L383.05 314.52 L384.71 317.98 L385.86 321.67 M392.14 304.22 L391.31 308.75 L392.94 312.83 L395.05 316.84 L395.67 321.10 M407.76 303.70 L409.80 307.38 L407.13 310.51 L406.74 313.91 L407.31 317.43 M420.76 306.36 L419.07 309.72 L416.94 312.94 L415.44 316.35 L414.83 320.06 M431.61 311.18 L429.64 314.94 L426.31 317.88 L423.64 321.22 L421.59 324.95 M442.65 319.88 L438.26 322.96 L434.13 326.31 L428.65 328.22 L424.14 331.18 M449.77 330.14 L446.27 331.07 L442.28 331.07 L438.87 332.20 L436.01 334.38 M453.32 342.67 L448.72 341.23 L444.55 343.26 L440.15 343.41 L435.71 343.24" stroke="#3e3e3e" stroke-width="1.1" fill="none"/></g>
<rect x="345" y="298" width="115" height="80" fill="#3a3a3a" filter="url(#crs2)" mask="url(#sagm)" opacity="0.7"/>
<ellipse cx="398" cy="345" rx="22" ry="9" fill="#8e8e8e"/>
</g>
<path d="M374 342 C377 332 396 326 410 331 C417 334 420 339 418.5 343 L416 343 C414 338 406 334 395 334.5 C385 335 380 339 377.5 343 Z" fill="#bdbdbd"/>
<path d="M380 341 C385 335 397 333 408 336.5 C401 339 389 341 380 342.5 Z" fill="#242424"/>
<path d="M392 343 C398 340 407 340 413 344 C410 348 400 349 394 347 Z" fill="#8a8a8a"/>
<!-- cerebellum -->
<ellipse cx="431" cy="358" rx="14" ry="13" fill="#868686"/>
<path d="M419 357 L443 353 M421 349 L441 364 M431 346 L431 370 M423 366 L441 350 M419 361 L442 360" stroke="#5a5a5a" stroke-width="0.7"/>
<!-- sinus area -->
<path d="M347 356 L394 354 C399 360 402 370 400 386 L347 388 Z" fill="#1e1e1e"/>
<path d="M347 365 L356 367 M361 366 L371 368 M352 358 L366 361 M384 359 L393 364 M374 372 L386 370" stroke="#c8c8c8" stroke-width="1.6"/>
<path d="M348 360 C352 356 358 358 362 362 C358 366 352 366 348 364 Z M365 368 C370 364 378 366 380 371 C375 374 368 373 365 371 Z M386 356 C390 354 396 356 398 360 C394 362 389 361 386 359 Z" fill="#a8a8a8"/>
<path d="M347 375 C360 373 380 374 396 379 L396 384 C380 381 360 380 347 382 Z" fill="#686868"/>
<path d="M350 374.5 C362 372.5 380 373.5 394 378" stroke="#aaa" stroke-width="0.9" fill="none"/>
<!-- brainstem/cord -->
<path d="M398 350 C405 347 415 350 418 357 C421 367 419 381 418 392 L418.5 432 L408.5 432 L408 392 C405 381 399 369 398 360 Z" fill="#7c7c7c"/>
<path d="M409.5 395 V432 M417.5 395 V432" stroke="#3a3a3a" stroke-width="0.8"/>
<!-- tongue / mouth -->
<path d="M347 386 C360 382 385 383 394 391 C398 405 397 420 395 432 L347 432 Z" fill="#808080"/>
<path d="M347 386 C360 382 385 383 394 391 C398 405 397 420 395 432 L347 432 Z" fill="#b0b0b0" filter="url(#nz2)" opacity="0.45"/>
<path d="M355 392 C370 388 384 392 390 402 M360 400 C370 397 380 402 384 410 M366 410 C372 408 377 412 379 418" stroke="#9c9c9c" stroke-width="1" fill="none"/>
<path d="M350 387 C362 384 382 385 392 391" stroke="#b4b4b4" stroke-width="1" fill="none"/>
<path d="M395 391 C399 405 398 420 396 432" stroke="#1e1e1e" stroke-width="2.5" fill="none"/>
<ellipse cx="354" cy="408" rx="5" ry="9" fill="#2a2a2a"/>
<path d="M357 420 L360 428" stroke="#c0c0c0" stroke-width="1.5"/>
<!-- vertebrae -->
<rect x="397" y="388" width="11.5" height="44" fill="#8a8a8a"/>
<path d="M398 399 H408 M398 410 H408 M398 421 H408" stroke="#c0c0c0" stroke-width="1"/>
<!-- neck back -->
<path d="M418 380 L453 373 C452 386 446 406 438 432 L418.5 432 Z" fill="#a4a4a4"/>
<path d="M420 400 L440 392 M421 414 L436 408 M423 426 L434 421" stroke="#c8c8c8" stroke-width="1.5"/>
<path d="M442 377 L429 432" stroke="#dcdcdc" stroke-width="3"/>
<path d="M424 386 L437 381" stroke="#cfcfcf" stroke-width="2"/>
<circle cx="423" cy="394" r="2.5" fill="#3a3a3a"/>
</g>
</g>
</svg>













<svg class="a" id="corsvg" style="left:536.6px;top:289.8px" width="261" height="140.2" viewBox="536.6 289.8 261 140.2">
<defs>
<filter id="bl3" x="-10%" y="-10%" width="120%" height="120%"><feGaussianBlur stdDeviation="0.55"/></filter>
<filter id="dsp3" x="-10%" y="-10%" width="120%" height="120%"><feTurbulence type="fractalNoise" baseFrequency="0.1" numOctaves="2" seed="13" result="n"/><feDisplacementMap in="SourceGraphic" in2="n" scale="6" xChannelSelector="R" yChannelSelector="G"/></filter>
<filter id="nz3" x="0" y="0" width="100%" height="100%"><feTurbulence type="fractalNoise" baseFrequency="0.13" numOctaves="2" seed="8" result="n"/><feColorMatrix in="n" type="matrix" values="0 0 0 0 0  0 0 0 0 0  0 0 0 0 0  0 0 0 -4 2.3" result="a"/><feComposite in="SourceGraphic" in2="a" operator="in"/><feGaussianBlur stdDeviation="0.6"/></filter>
<filter id="crs3" x="0" y="0" width="100%" height="100%"><feTurbulence type="turbulence" baseFrequency="0.11" numOctaves="1" seed="17" result="n"/><feColorMatrix in="n" type="matrix" values="0 0 0 0 0  0 0 0 0 0  0 0 0 0 0  -8 0 0 0 1.05" result="a"/><feGaussianBlur in="a" stdDeviation="0.7" result="ab"/><feComposite in="SourceGraphic" in2="ab" operator="in"/></filter>
<radialGradient id="ringm3" cx="0.5" cy="0.5" r="0.5"><stop offset="0.5" stop-color="#fff" stop-opacity="0"/><stop offset="0.8" stop-color="#fff" stop-opacity="0.9"/><stop offset="1" stop-color="#fff" stop-opacity="1"/></radialGradient>
<mask id="corm" maskUnits="userSpaceOnUse" x="626" y="298" width="84" height="84"><ellipse cx="668" cy="338" rx="40" ry="40" fill="url(#ringm3)"/></mask>
<clipPath id="corb"><path d="M632 366 C629 345 630 320 640 310 C650 303 660 303.5 668 303.5 C676 303.5 690 303 698 311 C706 320 707 345 704 366 C700 372 690 374 680 372 L668 380 L656 372 C646 374 636 372 632 366 Z"/></clipPath>
</defs>
<g filter="url(#bl3)">
<!-- skull -->
<path d="M627 372 C622 350 622 322 634 308 C645 298 660 297.5 668 297.5 C676 297.5 692 298 702 308 C714 322 714 350 709 372" fill="none" stroke="#d0d0d0" stroke-width="2.2"/>
<path d="M629.7 370 C625.5 348 626.5 324 636.5 311 C647 301 660 300.5 668 300.5 C676 300.5 690 301 699.5 311 C709.5 324 710.5 348 706.3 370" fill="none" stroke="#2a2a2a" stroke-width="1"/>
<path d="M631 369 C627.5 348 628.5 325 638 312.5 C648 302.5 660 302 668 302 C676 302 689 302.5 698 312.5 C707.5 325 708.5 348 705 369" fill="none" stroke="#7a7a7a" stroke-width="1"/>
<!-- brain -->
<g clip-path="url(#corb)">
<rect x="628" y="300" width="82" height="82" fill="#6e6e6e"/>
<g filter="url(#dsp3)"><path d="M696.93 337.00 L696.89 337.25 L696.69 337.50 L696.37 337.74 L695.94 337.98 L695.45 338.20 L694.92 338.41 L694.39 338.62 L693.88 338.81 L693.40 339.00 L692.97 339.19 L692.59 339.37 L692.27 339.55 L692.01 339.74 L691.80 339.93 L691.65 340.12 L691.54 340.31 L691.47 340.51 L691.45 340.72 L691.47 340.93 L691.53 341.15 L691.63 341.39 L691.77 341.63 L691.96 341.88 L692.19 342.15 L692.47 342.43 L692.80 342.74 L693.18 343.06 L693.60 343.40 L694.06 343.75 L694.54 344.13 L695.05 344.52 L695.56 344.92 L696.06 345.33 L696.54 345.75 L696.96 346.16 L697.32 346.55 L697.59 346.93 L697.75 347.27 L697.79 347.58 L697.69 347.84 L697.45 348.05 L697.06 348.19 L696.52 348.28 L695.84 348.29 L695.04 348.24 L694.14 348.14 L693.17 347.99 L692.16 347.80 L691.15 347.60 L690.18 347.39 L689.29 347.21 L688.52 347.06 L687.91 346.98 L687.48 346.98 L687.25 347.08 L687.23 347.29 L687.42 347.61 L687.82 348.05 L688.38 348.61 L689.09 349.26 L689.91 350.00 L690.78 350.79 L691.66 351.61 L692.51 352.44 L693.28 353.23 L693.92 353.97 L694.40 354.63 L694.70 355.17 L694.81 355.59 L694.71 355.88 L694.41 356.02 L693.92 356.03 L693.27 355.89 L692.47 355.64 L691.57 355.29 L690.58 354.85 L689.55 354.35 L688.51 353.82 L687.49 353.27 L686.52 352.75 L685.63 352.26 L684.83 351.83 L684.14 351.48 L683.57 351.23 L683.14 351.08 L682.84 351.06 L682.67 351.15 L682.63 351.37 L682.71 351.71 L682.90 352.16 L683.17 352.72 L683.52 353.38 L683.93 354.11 L684.37 354.91 L684.83 355.74 L685.29 356.61 L685.73 357.47 L686.13 358.32 L686.48 359.13 L686.76 359.89 L686.97 360.57 L687.09 361.16 L687.12 361.66 L687.05 362.04 L686.89 362.30 L686.64 362.43 L686.29 362.45 L685.87 362.34 L685.38 362.12 L684.82 361.79 L684.21 361.36 L683.56 360.86 L682.89 360.29 L682.21 359.67 L681.53 359.03 L680.87 358.38 L680.23 357.76 L679.64 357.17 L679.10 356.65 L678.62 356.20 L678.20 355.85 L677.86 355.62 L677.58 355.50 L677.38 355.52 L677.24 355.67 L677.16 355.94 L677.14 356.34 L677.16 356.85 L677.21 357.46 L677.29 358.15 L677.38 358.89 L677.46 359.66 L677.54 360.43 L677.59 361.20 L677.61 361.92 L677.60 362.58 L677.55 363.17 L677.46 363.68 L677.32 364.08 L677.15 364.39 L676.93 364.59 L676.69 364.69 L676.41 364.70 L676.11 364.62 L675.79 364.46 L675.45 364.23 L675.11 363.93 L674.76 363.59 L674.40 363.21 L674.06 362.82 L673.72 362.43 L673.39 362.06 L673.09 361.75 L672.80 361.50 L672.54 361.36 L672.31 361.34 L672.10 361.46 L671.91 361.74 L671.74 362.16 L671.58 362.73 L671.43 363.41 L671.27 364.18 L671.11 364.98 L670.93 365.78 L670.73 366.50 L670.51 367.11 L670.26 367.55 L669.99 367.77 L669.70 367.76 L669.41 367.51 L669.11 367.01 L668.81 366.29 L668.52 365.39 L668.25 364.36 L668.00 363.24 L667.77 362.11 L667.56 361.02 L667.36 360.03 L667.18 359.18 L667.01 358.52 L666.83 358.07 L666.65 357.84 L666.46 357.83 L666.25 358.04 L666.02 358.44 L665.76 359.01 L665.48 359.70 L665.17 360.48 L664.84 361.31 L664.50 362.15 L664.14 362.97 L663.78 363.72 L663.41 364.39 L663.05 364.95 L662.71 365.37 L662.38 365.66 L662.08 365.79 L661.81 365.78 L661.56 365.62 L661.36 365.31 L661.19 364.87 L661.06 364.31 L660.97 363.65 L660.91 362.89 L660.89 362.07 L660.90 361.20 L660.93 360.30 L660.98 359.40 L661.03 358.52 L661.09 357.70 L661.13 356.95 L661.15 356.32 L661.13 355.82 L661.06 355.49 L660.93 355.33 L660.72 355.38 L660.41 355.64 L660.02 356.11 L659.52 356.79 L658.93 357.65 L658.25 358.66 L657.49 359.79 L656.67 360.98 L655.83 362.17 L654.98 363.30 L654.18 364.29 L653.45 365.09 L652.84 365.63 L652.37 365.87 L652.08 365.78 L651.98 365.36 L652.07 364.60 L652.35 363.56 L652.79 362.28 L653.37 360.83 L654.02 359.31 L654.71 357.79 L655.36 356.38 L655.92 355.17 L656.33 354.21 L656.55 353.56 L656.54 353.25 L656.30 353.28 L655.81 353.64 L655.10 354.27 L654.21 355.12 L653.17 356.12 L652.05 357.19 L650.90 358.25 L649.78 359.23 L648.75 360.06 L647.84 360.71 L647.10 361.14 L646.54 361.34 L646.17 361.31 L645.98 361.08 L645.97 360.66 L646.11 360.09 L646.36 359.42 L646.71 358.67 L647.10 357.89 L647.52 357.10 L647.94 356.35 L648.32 355.64 L648.67 354.98 L648.95 354.40 L649.17 353.90 L649.32 353.46 L649.40 353.10 L649.42 352.80 L649.37 352.55 L649.27 352.36 L649.12 352.20 L648.92 352.08 L648.69 351.98 L648.42 351.91 L648.12 351.86 L647.80 351.82 L647.46 351.80 L647.09 351.78 L646.71 351.77 L646.31 351.76 L645.90 351.76 L645.48 351.75 L645.05 351.74 L644.63 351.72 L644.22 351.68 L643.82 351.64 L643.44 351.57 L643.10 351.47 L642.80 351.35 L642.54 351.20 L642.34 351.02 L642.21 350.80 L642.15 350.54 L642.17 350.24 L642.27 349.90 L642.45 349.53 L642.71 349.12 L643.05 348.69 L643.46 348.23 L643.93 347.76 L644.45 347.28 L645.00 346.80 L645.56 346.33 L646.11 345.88 L646.63 345.45 L647.10 345.05 L647.49 344.70 L647.78 344.38 L647.96 344.12 L648.02 343.90 L647.94 343.73 L647.71 343.61 L647.35 343.53 L646.86 343.48 L646.24 343.46 L645.52 343.46 L644.73 343.47 L643.88 343.48 L643.00 343.48 L642.13 343.46 L641.30 343.42 L640.52 343.35 L639.84 343.25 L639.26 343.12 L638.81 342.95 L638.51 342.74 L638.35 342.50 L638.36 342.23 L638.51 341.94 L638.81 341.63 L639.25 341.30 L639.80 340.97 L640.45 340.63 L641.17 340.30 L641.92 339.97 L642.68 339.66 L643.41 339.37 L644.08 339.10 L644.64 338.84 L645.07 338.60 L645.34 338.39 L645.42 338.18 L645.31 337.99 L644.99 337.80 L644.46 337.62 L643.75 337.42 L642.86 337.22 L641.84 337.00 L640.71 336.76 L639.51 336.50 L638.30 336.22 L637.11 335.92 L636.00 335.60 L635.01 335.27 L634.18 334.93 L633.53 334.59 L633.10 334.25 L632.90 333.93 L632.94 333.62 L633.22 333.34 L633.73 333.09 L634.45 332.88 L635.36 332.70 L636.42 332.56 L637.62 332.45 L638.90 332.38 L640.23 332.35 L641.56 332.33 L642.87 332.34 L644.10 332.35 L645.24 332.36 L646.24 332.37 L647.08 332.35 L647.75 332.32 L648.23 332.24 L648.51 332.13 L648.59 331.97 L648.49 331.76 L648.20 331.50 L647.76 331.18 L647.18 330.82 L646.50 330.41 L645.73 329.96 L644.93 329.48 L644.11 328.98 L643.31 328.47 L642.57 327.96 L641.91 327.47 L641.36 327.00 L640.94 326.57 L640.66 326.19 L640.55 325.87 L640.60 325.60 L640.81 325.41 L641.17 325.28 L641.67 325.22 L642.29 325.23 L643.02 325.30 L643.82 325.41 L644.67 325.56 L645.53 325.74 L646.38 325.92 L647.17 326.09 L647.87 326.23 L648.45 326.32 L648.89 326.34 L649.17 326.27 L649.26 326.11 L649.17 325.83 L648.90 325.44 L648.46 324.94 L647.89 324.34 L647.22 323.65 L646.50 322.92 L645.78 322.17 L645.12 321.43 L644.57 320.75 L644.17 320.16 L643.97 319.69 L643.98 319.37 L644.21 319.21 L644.65 319.21 L645.27 319.37 L646.04 319.65 L646.91 320.03 L647.82 320.46 L648.72 320.91 L649.55 321.31 L650.26 321.65 L650.83 321.87 L651.22 321.95 L651.44 321.87 L651.48 321.63 L651.36 321.24 L651.11 320.71 L650.75 320.07 L650.33 319.34 L649.88 318.56 L649.44 317.77 L649.03 316.99 L648.68 316.25 L648.41 315.58 L648.24 314.99 L648.16 314.50 L648.18 314.12 L648.30 313.83 L648.51 313.65 L648.78 313.56 L649.13 313.55 L649.53 313.61 L649.96 313.74 L650.43 313.91 L650.92 314.13 L651.42 314.37 L651.92 314.63 L652.42 314.91 L652.91 315.18 L653.38 315.46 L653.84 315.72 L654.27 315.96 L654.68 316.17 L655.06 316.34 L655.39 316.47 L655.69 316.54 L655.94 316.54 L656.15 316.46 L656.30 316.29 L656.40 316.02 L656.45 315.65 L656.45 315.18 L656.40 314.60 L656.32 313.93 L656.21 313.17 L656.08 312.35 L655.95 311.49 L655.83 310.61 L655.74 309.77 L655.70 308.99 L655.71 308.32 L655.80 307.80 L655.98 307.46 L656.25 307.34 L656.61 307.47 L657.06 307.85 L657.60 308.49 L658.21 309.38 L658.87 310.47 L659.56 311.74 L660.27 313.12 L660.96 314.55 L661.61 315.95 L662.20 317.24 L662.71 318.35 L663.13 319.21 L663.46 319.78 L663.68 320.00 L663.81 319.87 L663.87 319.38 L663.85 318.56 L663.79 317.46 L663.71 316.14 L663.62 314.66 L663.55 313.12 L663.50 311.59 L663.50 310.16 L663.56 308.89 L663.67 307.84 L663.83 307.06 L664.05 306.56 L664.31 306.36 L664.60 306.44 L664.92 306.78 L665.26 307.35 L665.59 308.09 L665.93 308.96 L666.25 309.92 L666.55 310.90 L666.84 311.86 L667.11 312.78 L667.35 313.60 L667.58 314.32 L667.80 314.90 L668.00 315.34 L668.20 315.64 L668.39 315.80 L668.59 315.82 L668.79 315.70 L668.99 315.47 L669.21 315.12 L669.44 314.69 L669.69 314.17 L669.95 313.58 L670.22 312.95 L670.52 312.28 L670.83 311.58 L671.15 310.87 L671.48 310.17 L671.83 309.49 L672.19 308.83 L672.55 308.21 L672.92 307.65 L673.28 307.15 L673.65 306.72 L674.00 306.38 L674.35 306.12 L674.68 305.96 L675.00 305.89 L675.29 305.93 L675.56 306.06 L675.80 306.30 L676.01 306.63 L676.20 307.06 L676.35 307.56 L676.47 308.14 L676.57 308.78 L676.64 309.47 L676.68 310.19 L676.71 310.92 L676.72 311.65 L676.73 312.37 L676.74 313.04 L676.76 313.66 L676.79 314.22 L676.84 314.69 L676.92 315.08 L677.04 315.36 L677.19 315.55 L677.38 315.64 L677.62 315.63 L677.90 315.54 L678.21 315.38 L678.56 315.16 L678.94 314.89 L679.35 314.59 L679.76 314.29 L680.18 314.00 L680.60 313.73 L681.00 313.50 L681.38 313.31 L681.74 313.19 L682.06 313.13 L682.35 313.15 L682.60 313.23 L682.80 313.39 L682.95 313.62 L683.05 313.93 L683.10 314.31 L683.10 314.75 L683.04 315.25 L682.94 315.81 L682.80 316.41 L682.62 317.04 L682.43 317.68 L682.22 318.31 L682.03 318.90 L681.88 319.43 L681.79 319.87 L681.77 320.20 L681.86 320.40 L682.07 320.46 L682.40 320.37 L682.88 320.13 L683.48 319.76 L684.20 319.28 L685.02 318.72 L685.90 318.12 L686.82 317.51 L687.72 316.93 L688.58 316.43 L689.35 316.04 L689.99 315.80 L690.47 315.72 L690.77 315.82 L690.88 316.09 L690.80 316.54 L690.53 317.15 L690.08 317.89 L689.50 318.73 L688.80 319.64 L688.03 320.58 L687.22 321.53 L686.43 322.43 L685.69 323.27 L685.04 324.02 L684.52 324.65 L684.14 325.15 L683.95 325.51 L683.93 325.74 L684.11 325.82 L684.48 325.78 L685.04 325.62 L685.76 325.37 L686.63 325.04 L687.62 324.65 L688.70 324.22 L689.83 323.78 L691.00 323.36 L692.16 322.96 L693.28 322.60 L694.33 322.31 L695.27 322.10 L696.09 321.97 L696.77 321.94 L697.28 322.00 L697.61 322.16 L697.75 322.41 L697.71 322.76 L697.49 323.18 L697.09 323.68 L696.53 324.24 L695.84 324.84 L695.03 325.48 L694.15 326.13 L693.22 326.77 L692.30 327.39 L691.42 327.98 L690.63 328.51 L689.98 328.97 L689.51 329.36 L689.25 329.66 L689.24 329.87 L689.49 330.00 L690.01 330.04 L690.78 330.02 L691.77 329.94 L692.95 329.83 L694.25 329.70 L695.60 329.59 L696.90 329.51 L698.09 329.48 L699.06 329.53 L699.76 329.65 L700.13 329.87 L700.12 330.16 L699.74 330.53 L698.99 330.97 L697.94 331.44 L696.64 331.94 L695.19 332.44 L693.69 332.93 L692.24 333.37 L690.94 333.77 L689.87 334.12 L689.09 334.41 L688.66 334.64 L688.57 334.84 L688.82 334.99 L689.37 335.13 L690.15 335.25 L691.11 335.38 L692.16 335.52 L693.22 335.68 L694.24 335.85 L695.13 336.05 L695.87 336.27 L696.43 336.50 L696.78 336.75 L696.93 337.00 Z" fill="#9e9e9e"/><path d="M704.19 342.51 L701.27 341.53 L698.32 340.71 L695.23 340.93 L692.18 340.80 M700.68 353.09 L696.88 352.79 L694.29 350.26 L691.18 348.69 L688.18 346.90 M693.28 362.79 L691.02 359.76 L688.18 357.28 L685.81 354.35 L683.64 351.21 M684.55 368.79 L682.60 365.75 L681.57 362.26 L678.72 359.65 L677.88 356.08 M675.01 371.98 L673.17 369.70 L674.06 366.96 L672.18 364.68 L672.54 362.03 M665.43 372.55 L666.10 369.07 L666.06 365.55 L666.76 362.06 L667.13 358.56 M654.41 370.10 L657.03 366.96 L657.47 363.03 L659.71 359.75 L660.14 355.81 M646.51 365.86 L649.03 362.94 L651.28 359.83 L653.77 356.89 L655.85 353.66 M640.46 360.50 L642.14 358.15 L643.91 355.87 L646.80 354.92 L648.25 352.28 M633.16 348.01 L636.96 347.77 L640.45 346.64 L643.86 345.31 L647.35 344.20 M631.38 337.88 L634.75 338.98 L638.11 339.41 L641.41 339.04 L644.67 337.94 M632.87 326.91 L636.40 328.91 L640.22 329.89 L644.07 330.79 L647.95 331.55 M636.16 319.37 L639.61 320.42 L642.59 322.26 L645.67 323.93 L648.39 326.20 M640.81 313.12 L643.49 315.01 L646.63 316.45 L648.33 319.36 L650.99 321.28 M649.65 306.16 L650.76 308.82 L652.19 311.29 L654.78 313.13 L656.12 315.66 M659.00 302.45 L660.67 306.54 L661.68 310.78 L663.01 314.95 L664.03 319.19 M668.64 301.37 L669.73 304.84 L669.50 308.27 L668.74 311.68 L669.04 315.12 M682.25 304.17 L680.86 306.77 L679.49 309.39 L679.32 312.50 L677.12 314.77 M690.37 308.78 L689.39 312.35 L687.10 314.90 L684.51 317.21 L682.69 320.13 M697.05 315.28 L694.08 318.00 L690.87 320.40 L687.74 322.91 L684.29 325.00 M702.30 324.48 L699.34 326.12 L696.50 328.15 L693.34 329.26 L690.04 329.94 M704.41 333.08 L700.58 333.06 L696.93 334.70 L693.08 334.37 L689.33 335.02" stroke="#3e3e3e" stroke-width="1.1" fill="none"/></g>
<rect x="626" y="298" width="84" height="84" fill="#3a3a3a" filter="url(#crs3)" mask="url(#corm)" opacity="0.7"/>
<ellipse cx="668" cy="352" rx="13" ry="20" fill="#9a9a9a"/>
<ellipse cx="650" cy="359" rx="8" ry="7.5" fill="#707070"/>
<ellipse cx="686" cy="359" rx="8" ry="7.5" fill="#707070"/>
<path d="M641 352 C646 350 652 351 656 354 M695 352 C690 350 684 351 680 354" stroke="#303030" stroke-width="1.2" fill="none"/>
</g>
<path d="M659 331.5 C662 333 666 335 667 337 L664 337 C661 336 659 334 658 332 Z M678 331.5 C675 333 671 335 669 337 L672 337 C675 336 677 334 678 332 Z" fill="#222" stroke="#222" stroke-width="1.2"/>
<path d="M668 342 V348 M668 352 V356" stroke="#333" stroke-width="1"/>
<!-- lower sides dark -->
<path d="M627 364 C625 369 627 373 632 374" stroke="#c8c8c8" stroke-width="2" fill="none"/>
<path d="M709 364 C711 369 709 373 704 374" stroke="#c8c8c8" stroke-width="2" fill="none"/>
<!-- neck -->
<path d="M630 384 C638 376 652 374 668 380 C684 374 698 376 707 384 L706 432 L631 432 Z" fill="#7e7e7e"/>
<path d="M630 384 C638 376 652 374 668 380 C684 374 698 376 707 384 L706 432 L631 432 Z" fill="#c0c0c0" filter="url(#nz3)" opacity="0.5"/>
<path d="M660 392 C664 396 672 396 676 392 M658 420 H678" stroke="#c8c8c8" stroke-width="1.5" fill="none"/>
<path d="M651 376 C648 390 648 410 650 432" stroke="#d8d8d8" stroke-width="2.2" fill="none"/>
<path d="M685 376 C688 390 688 410 686 432" stroke="#d8d8d8" stroke-width="2.2" fill="none"/>
<ellipse cx="656" cy="372" rx="4.5" ry="4" fill="#cfcfcf"/>
<ellipse cx="680" cy="372" rx="4.5" ry="4" fill="#cfcfcf"/>
<path d="M661 386 H675 M662 390 H674" stroke="#d8d8d8" stroke-width="1.5"/>
<path d="M654 400 L664 404 M682 400 L672 404" stroke="#333" stroke-width="1.2"/>
<path d="M636 382 V432 M701 382 V432" stroke="#505050" stroke-width="1"/>
<path d="M662 410 H674 M663 418 H673" stroke="#a8a8a8" stroke-width="1.5"/>
<circle cx="627" cy="383" r="1.5" fill="#ddd"/>
<circle cx="709" cy="383" r="1.5" fill="#ddd"/>
</g>
</svg>







<!-- controllers -->
<div class="a" style="left:271px;top:44.5px;width:262px;height:6px;background:#f34a33"></div>
<svg class="a" style="left:399.8px;top:45.6px" width="6" height="4"><path d="M0.7 3.2 H5.3 L3 0.4 Z" fill="#111"/></svg>
<div class="a" style="left:285px;top:63.7px;width:248px;height:1.6px;background:#bcbcbc"></div>
<div class="a" style="left:285px;top:78.4px;width:248px;height:1px;background:#d8d8d8"></div>
<div class="a" style="left:271.5px;top:51.0px;width:13.5px;height:13.2px;border:1px solid #333;background:#f6f6f6"><svg width="11.5" height="11.2" viewBox="0 0 12 12" preserveAspectRatio="none" style="position:absolute;left:0;top:0"><path d="M3 2 H9 V9 H3 Z M5 2 V9 M7 2 V9 M3 4.5 H9 M3 7 H9" fill="none" stroke="#444" stroke-width="0.6"/><path d="M6 0.5 V2 M10 5 L11 6 L10 7 M2 9 L1 10" stroke="#333" stroke-width="0.6" fill="none"/><circle cx="3.5" cy="9" r="0.8" fill="#222"/><path d="M9 11 H11.5" stroke="#222" stroke-width="0.7"/></svg></div>
<div class="combo" style="left:286.6px;top:51.3px;width:104px;height:12.4px;border:none;border-left:1px solid #c0c0c0;border-top:1px solid #c0c0c0"></div>
<div class="t" style="left:286.6px;top:55.8px;width:87px;text-align:center;font-size:5.5px;color:#222;-webkit-text-stroke:0.1px #222">Axial</div>
<div class="a" style="left:376.5px;top:56.2px;width:10px;height:3.4px;border:0.7px solid #b4b4b4;border-radius:0.6px;background:#f2f2f2"></div>
<div class="a" style="left:392.5px;top:51.0px;width:8.5px;height:13px;background:#e0e0e0"><svg width="8.5" height="13" style="position:absolute;left:0;top:0"><rect x="0.6" y="0.6" width="7.3" height="5.4" fill="#f6f6f6" stroke="#c8c8c8" stroke-width="0.5"/><rect x="0.6" y="6.9" width="7.3" height="5.4" fill="#f6f6f6" stroke="#c8c8c8" stroke-width="0.5"/><path d="M2.2 4.6 H6.3 L4.25 2.2 Z M2.2 8.4 H6.3 L4.25 10.8 Z" fill="#111"/></svg></div>
<div class="a" style="left:402px;top:51.0px;width:13.5px;height:13.2px;border:1px solid #333;background:#f6f6f6"><svg width="11.5" height="11.2" viewBox="0 0 12 12" preserveAspectRatio="none" style="position:absolute;left:0;top:0"><path d="M2 4 L4.5 1.5 H10 V8 L7.5 10.5 H2 Z" fill="#c8c8c8" stroke="#888" stroke-width="0.4"/><rect x="3.5" y="1.5" width="6.5" height="6.5" fill="#f0b830" stroke="#604010" stroke-width="0.5"/><text x="6.7" y="6.8" font-size="5.5" font-family="Liberation Sans" text-anchor="middle" fill="#332200">f</text><path d="M9.5 11 L11.5 11 L10.5 12 Z" fill="#222"/></svg></div>
<div class="combo" style="left:418px;top:51.3px;width:103.5px;height:12.4px;border:none;border-left:1px solid #c0c0c0;border-top:1px solid #c0c0c0"></div>
<div class="t" style="left:418px;top:55.8px;width:88px;text-align:center;font-size:5.5px;color:#222;-webkit-text-stroke:0.1px #222">target_t2</div>
<div class="a" style="left:508px;top:56.2px;width:10px;height:3.4px;border:0.7px solid #b4b4b4;border-radius:0.6px;background:#f2f2f2"></div>
<div class="a" style="left:523.8px;top:51.0px;width:8.5px;height:13px;background:#e0e0e0"><svg width="8.5" height="13" style="position:absolute;left:0;top:0"><rect x="0.6" y="0.6" width="7.3" height="5.4" fill="#f6f6f6" stroke="#c8c8c8" stroke-width="0.5"/><rect x="0.6" y="6.9" width="7.3" height="5.4" fill="#f6f6f6" stroke="#c8c8c8" stroke-width="0.5"/><path d="M2.2 4.6 H6.3 L4.25 2.2 Z M2.2 8.4 H6.3 L4.25 10.8 Z" fill="#111"/></svg></div>
<div class="a" style="left:271.5px;top:65.30000000000001px;width:13.5px;height:13.2px;border:1px solid #333;background:#f6f6f6"><svg width="11.5" height="11.2" viewBox="0 0 12 12" preserveAspectRatio="none" style="position:absolute;left:0;top:0"><path d="M2 4 L4.5 1.5 H10 V8 L7.5 10.5 H2 Z" fill="#c8c8c8" stroke="#888" stroke-width="0.4"/><rect x="1" y="4" width="6.5" height="6.5" fill="#f0b830" stroke="#604010" stroke-width="0.5"/><text x="4.2" y="9.3" font-size="5.5" font-family="Liberation Sans" text-anchor="middle" fill="#332200">L</text><path d="M9.5 11 L11.5 11 L10.5 12 Z" fill="#222"/></svg></div>
<div class="combo" style="left:286.6px;top:65.60000000000001px;width:104px;height:12.4px;border:none;border-left:1px solid #c0c0c0;border-top:1px solid #c0c0c0"></div>
<div class="t" style="left:286.6px;top:70.10000000000001px;width:87px;text-align:center;font-size:5.5px;color:#222;-webkit-text-stroke:0.1px #222">None</div>
<div class="a" style="left:376.5px;top:70.50000000000001px;width:10px;height:3.4px;border:0.7px solid #b4b4b4;border-radius:0.6px;background:#f2f2f2"></div>
<div class="a" style="left:392.5px;top:65.30000000000001px;width:8.5px;height:13px;background:#e0e0e0"><svg width="8.5" height="13" style="position:absolute;left:0;top:0"><rect x="0.6" y="0.6" width="7.3" height="5.4" fill="#f6f6f6" stroke="#c8c8c8" stroke-width="0.5"/><rect x="0.6" y="6.9" width="7.3" height="5.4" fill="#f6f6f6" stroke="#c8c8c8" stroke-width="0.5"/><path d="M2.2 4.6 H6.3 L4.25 2.2 Z M2.2 8.4 H6.3 L4.25 10.8 Z" fill="#111"/></svg></div>
<div class="a" style="left:402px;top:65.30000000000001px;width:13.5px;height:13.2px;border:1px solid #333;background:#f6f6f6"><svg width="11.5" height="11.2" viewBox="0 0 12 12" preserveAspectRatio="none" style="position:absolute;left:0;top:0"><path d="M2 4 L4.5 1.5 H10 V8 L7.5 10.5 H2 Z" fill="#c8c8c8" stroke="#888" stroke-width="0.4"/><rect x="3.5" y="1.5" width="6.5" height="6.5" fill="#f0b830" stroke="#604010" stroke-width="0.5"/><text x="6.7" y="6.8" font-size="5.5" font-family="Liberation Sans" text-anchor="middle" fill="#332200">B</text><path d="M9.5 11 L11.5 11 L10.5 12 Z" fill="#222"/></svg></div>
<div class="combo" style="left:418px;top:65.60000000000001px;width:103.5px;height:12.4px;border:none;border-left:1px solid #c0c0c0;border-top:1px solid #c0c0c0"></div>
<div class="t" style="left:418px;top:70.10000000000001px;width:88px;text-align:center;font-size:5.5px;color:#222;-webkit-text-stroke:0.1px #222">target_t1</div>
<div class="a" style="left:508px;top:70.50000000000001px;width:10px;height:3.4px;border:0.7px solid #b4b4b4;border-radius:0.6px;background:#f2f2f2"></div>
<div class="a" style="left:523.8px;top:65.30000000000001px;width:8.5px;height:13px;background:#e0e0e0"><svg width="8.5" height="13" style="position:absolute;left:0;top:0"><rect x="0.6" y="0.6" width="7.3" height="5.4" fill="#f6f6f6" stroke="#c8c8c8" stroke-width="0.5"/><rect x="0.6" y="6.9" width="7.3" height="5.4" fill="#f6f6f6" stroke="#c8c8c8" stroke-width="0.5"/><path d="M2.2 4.6 H6.3 L4.25 2.2 Z M2.2 8.4 H6.3 L4.25 10.8 Z" fill="#111"/></svg></div>
<div class="a" style="left:272.6px;top:79.2px;width:13.8px;height:13.8px;border:1px solid #444;background:#fff"><svg width="11.8" height="11.8" viewBox="0 0 12 12" preserveAspectRatio="none" style="position:absolute;left:0;top:0"><circle cx="4.5" cy="7" r="3" fill="none" stroke="#333" stroke-width="1"/><circle cx="7.5" cy="5" r="3" fill="none" stroke="#333" stroke-width="1"/><circle cx="6" cy="6" r="1" fill="none" stroke="#555" stroke-width="0.5"/></svg></div>
<div class="a" style="left:289px;top:79.2px;width:13.8px;height:13.8px;border:1px solid #444;background:#fff"><svg width="11.8" height="11.8" viewBox="0 0 12 12" preserveAspectRatio="none" style="position:absolute;left:0;top:0"><path d="M1.5 6 C4 2.5 8 2.5 10.5 6" fill="none" stroke="#555" stroke-width="0.7"/><path d="M1.5 6 C4 8.5 8 8.5 10.5 6" fill="none" stroke="#444" stroke-width="0.8"/><path d="M3 8 L2 9.5 M5 8.5 L4.5 10 M7 8.5 L7.5 10 M9 8 L10 9.5" stroke="#666" stroke-width="0.4"/></svg></div>
<div class="a" style="left:305px;top:79.2px;width:13.8px;height:13.8px;border:1px solid #444;background:#999"><svg width="11.8" height="11.8" viewBox="0 0 12 12" preserveAspectRatio="none" style="position:absolute;left:0;top:0"><rect x="0" y="0" width="12" height="12" fill="#999"/><rect x="2.5" y="2" width="3.5" height="4" fill="#ccc"/><rect x="6" y="2" width="3.5" height="8" fill="#444"/><rect x="2.5" y="6" width="3.5" height="4" fill="#777"/><path d="M6 0 V1.5 M6 10.5 V12 M0 6 H1.5 M10.5 6 H12" stroke="#111" stroke-width="0.6"/></svg></div>
<div class="a" style="left:322px;top:79.2px;width:13.8px;height:13.8px;border:1px solid #444;background:#aaa"><svg width="11.8" height="11.8" viewBox="0 0 12 12" preserveAspectRatio="none" style="position:absolute;left:0;top:0"><rect x="0" y="0" width="12" height="12" fill="#aaa"/><defs><linearGradient id="mg" x1="0" x2="1"><stop offset="0" stop-color="#dde8f8"/><stop offset="1" stop-color="#2a70d0"/></linearGradient></defs><rect x="2" y="2" width="8" height="5.5" rx="1.5" fill="url(#mg)" stroke="#334" stroke-width="0.5"/><path d="M2.5 9.8 H9.5" stroke="#822" stroke-width="0.6"/><circle cx="2.5" cy="9.8" r="0.6" fill="#822"/><circle cx="9.5" cy="9.8" r="0.6" fill="#822"/></svg></div>
<div class="a" style="left:337px;top:79.2px;width:13.8px;height:13.8px;border:1px solid #444;background:#aaa"><svg width="11.8" height="11.8" viewBox="0 0 12 12" preserveAspectRatio="none" style="position:absolute;left:0;top:0"><rect x="0" y="0" width="12" height="12" fill="#aaa"/><defs><linearGradient id="rb" x1="0" x2="1"><stop offset="0" stop-color="#f00"/><stop offset="0.25" stop-color="#ff0"/><stop offset="0.5" stop-color="#0f0"/><stop offset="0.75" stop-color="#00f"/><stop offset="1" stop-color="#f0f"/></linearGradient><linearGradient id="bw" x1="0" x2="1"><stop offset="0" stop-color="#000"/><stop offset="1" stop-color="#fff"/></linearGradient></defs><rect x="1.5" y="1" width="9" height="3" fill="url(#rb)"/><rect x="1.5" y="4.5" width="9" height="4.5" fill="url(#bw)"/></svg></div>
<div class="a" style="left:352.2px;top:79.2px;width:13.8px;height:13.8px;border:1px solid #444;background:#999"><svg width="11.8" height="11.8" viewBox="0 0 12 12" preserveAspectRatio="none" style="position:absolute;left:0;top:0"><rect x="0" y="0" width="12" height="12" fill="#999"/><path d="M2 0 V12 M4.5 0 V12 M7 0 V12 M9.5 0 V12 M0 2 H12 M0 4.5 H12 M0 7 H12 M0 9.5 H12" stroke="#555" stroke-width="0.5"/></svg></div>
<div class="a" style="left:367.5px;top:80.5px;width:129px;height:12.5px;background:#aaa;border-left:1px solid #ddd;border-top:1px solid #ddd"></div>
<div class="a" style="left:437.8px;top:81.7px;width:9.4px;height:10.5px;background:#f4f4f4;border-right:0.5px solid #ccc"></div>
<div class="a" style="left:447.2px;top:81.7px;width:9.4px;height:10.5px;background:#f4f4f4"></div>
<div class="a" style="left:497.3px;top:79.4px;width:35.69999999999999px;height:14.3px;background:#fff;border-left:1px solid #c0c0c0;border-top:1px solid #c0c0c0"></div>
<div class="t" style="left:498.5px;top:83.0px;font-size:7px;color:#111">-84.375</div>
<div class="a" style="left:271px;top:238.5px;width:262px;height:6px;background:#edd54c"></div>
<svg class="a" style="left:399.8px;top:239.6px" width="6" height="4"><path d="M0.7 3.2 H5.3 L3 0.4 Z" fill="#111"/></svg>
<div class="a" style="left:285px;top:257.7px;width:248px;height:1.6px;background:#bcbcbc"></div>
<div class="a" style="left:285px;top:272.4px;width:248px;height:1px;background:#d8d8d8"></div>
<div class="a" style="left:271.5px;top:245.0px;width:13.5px;height:13.2px;border:1px solid #333;background:#f6f6f6"><svg width="11.5" height="11.2" viewBox="0 0 12 12" preserveAspectRatio="none" style="position:absolute;left:0;top:0"><path d="M3 2 H9 V9 H3 Z M5 2 V9 M7 2 V9 M3 4.5 H9 M3 7 H9" fill="none" stroke="#444" stroke-width="0.6"/><path d="M6 0.5 V2 M10 5 L11 6 L10 7 M2 9 L1 10" stroke="#333" stroke-width="0.6" fill="none"/><circle cx="3.5" cy="9" r="0.8" fill="#222"/><path d="M9 11 H11.5" stroke="#222" stroke-width="0.7"/></svg></div>
<div class="combo" style="left:286.6px;top:245.3px;width:104px;height:12.4px;border:none;border-left:1px solid #c0c0c0;border-top:1px solid #c0c0c0"></div>
<div class="t" style="left:286.6px;top:249.8px;width:87px;text-align:center;font-size:5.5px;color:#222;-webkit-text-stroke:0.1px #222">Sagittal</div>
<div class="a" style="left:376.5px;top:250.2px;width:10px;height:3.4px;border:0.7px solid #b4b4b4;border-radius:0.6px;background:#f2f2f2"></div>
<div class="a" style="left:392.5px;top:245.0px;width:8.5px;height:13px;background:#e0e0e0"><svg width="8.5" height="13" style="position:absolute;left:0;top:0"><rect x="0.6" y="0.6" width="7.3" height="5.4" fill="#f6f6f6" stroke="#c8c8c8" stroke-width="0.5"/><rect x="0.6" y="6.9" width="7.3" height="5.4" fill="#f6f6f6" stroke="#c8c8c8" stroke-width="0.5"/><path d="M2.2 4.6 H6.3 L4.25 2.2 Z M2.2 8.4 H6.3 L4.25 10.8 Z" fill="#111"/></svg></div>
<div class="a" style="left:402px;top:245.0px;width:13.5px;height:13.2px;border:1px solid #333;background:#f6f6f6"><svg width="11.5" height="11.2" viewBox="0 0 12 12" preserveAspectRatio="none" style="position:absolute;left:0;top:0"><path d="M2 4 L4.5 1.5 H10 V8 L7.5 10.5 H2 Z" fill="#c8c8c8" stroke="#888" stroke-width="0.4"/><rect x="3.5" y="1.5" width="6.5" height="6.5" fill="#f0b830" stroke="#604010" stroke-width="0.5"/><text x="6.7" y="6.8" font-size="5.5" font-family="Liberation Sans" text-anchor="middle" fill="#332200">f</text><path d="M9.5 11 L11.5 11 L10.5 12 Z" fill="#222"/></svg></div>
<div class="combo" style="left:418px;top:245.3px;width:103.5px;height:12.4px;border:none;border-left:1px solid #c0c0c0;border-top:1px solid #c0c0c0"></div>
<div class="t" style="left:418px;top:249.8px;width:88px;text-align:center;font-size:5.5px;color:#222;-webkit-text-stroke:0.1px #222">target_t2</div>
<div class="a" style="left:508px;top:250.2px;width:10px;height:3.4px;border:0.7px solid #b4b4b4;border-radius:0.6px;background:#f2f2f2"></div>
<div class="a" style="left:523.8px;top:245.0px;width:8.5px;height:13px;background:#e0e0e0"><svg width="8.5" height="13" style="position:absolute;left:0;top:0"><rect x="0.6" y="0.6" width="7.3" height="5.4" fill="#f6f6f6" stroke="#c8c8c8" stroke-width="0.5"/><rect x="0.6" y="6.9" width="7.3" height="5.4" fill="#f6f6f6" stroke="#c8c8c8" stroke-width="0.5"/><path d="M2.2 4.6 H6.3 L4.25 2.2 Z M2.2 8.4 H6.3 L4.25 10.8 Z" fill="#111"/></svg></div>
<div class="a" style="left:271.5px;top:259.3px;width:13.5px;height:13.2px;border:1px solid #333;background:#f6f6f6"><svg width="11.5" height="11.2" viewBox="0 0 12 12" preserveAspectRatio="none" style="position:absolute;left:0;top:0"><path d="M2 4 L4.5 1.5 H10 V8 L7.5 10.5 H2 Z" fill="#c8c8c8" stroke="#888" stroke-width="0.4"/><rect x="1" y="4" width="6.5" height="6.5" fill="#f0b830" stroke="#604010" stroke-width="0.5"/><text x="4.2" y="9.3" font-size="5.5" font-family="Liberation Sans" text-anchor="middle" fill="#332200">L</text><path d="M9.5 11 L11.5 11 L10.5 12 Z" fill="#222"/></svg></div>
<div class="combo" style="left:286.6px;top:259.6px;width:104px;height:12.4px;border:none;border-left:1px solid #c0c0c0;border-top:1px solid #c0c0c0"></div>
<div class="t" style="left:286.6px;top:264.1px;width:87px;text-align:center;font-size:5.5px;color:#222;-webkit-text-stroke:0.1px #222">None</div>
<div class="a" style="left:376.5px;top:264.5px;width:10px;height:3.4px;border:0.7px solid #b4b4b4;border-radius:0.6px;background:#f2f2f2"></div>
<div class="a" style="left:392.5px;top:259.3px;width:8.5px;height:13px;background:#e0e0e0"><svg width="8.5" height="13" style="position:absolute;left:0;top:0"><rect x="0.6" y="0.6" width="7.3" height="5.4" fill="#f6f6f6" stroke="#c8c8c8" stroke-width="0.5"/><rect x="0.6" y="6.9" width="7.3" height="5.4" fill="#f6f6f6" stroke="#c8c8c8" stroke-width="0.5"/><path d="M2.2 4.6 H6.3 L4.25 2.2 Z M2.2 8.4 H6.3 L4.25 10.8 Z" fill="#111"/></svg></div>
<div class="a" style="left:402px;top:259.3px;width:13.5px;height:13.2px;border:1px solid #333;background:#f6f6f6"><svg width="11.5" height="11.2" viewBox="0 0 12 12" preserveAspectRatio="none" style="position:absolute;left:0;top:0"><path d="M2 4 L4.5 1.5 H10 V8 L7.5 10.5 H2 Z" fill="#c8c8c8" stroke="#888" stroke-width="0.4"/><rect x="3.5" y="1.5" width="6.5" height="6.5" fill="#f0b830" stroke="#604010" stroke-width="0.5"/><text x="6.7" y="6.8" font-size="5.5" font-family="Liberation Sans" text-anchor="middle" fill="#332200">B</text><path d="M9.5 11 L11.5 11 L10.5 12 Z" fill="#222"/></svg></div>
<div class="combo" style="left:418px;top:259.6px;width:103.5px;height:12.4px;border:none;border-left:1px solid #c0c0c0;border-top:1px solid #c0c0c0"></div>
<div class="t" style="left:418px;top:264.1px;width:88px;text-align:center;font-size:5.5px;color:#222;-webkit-text-stroke:0.1px #222">target_t1</div>
<div class="a" style="left:508px;top:264.5px;width:10px;height:3.4px;border:0.7px solid #b4b4b4;border-radius:0.6px;background:#f2f2f2"></div>
<div class="a" style="left:523.8px;top:259.3px;width:8.5px;height:13px;background:#e0e0e0"><svg width="8.5" height="13" style="position:absolute;left:0;top:0"><rect x="0.6" y="0.6" width="7.3" height="5.4" fill="#f6f6f6" stroke="#c8c8c8" stroke-width="0.5"/><rect x="0.6" y="6.9" width="7.3" height="5.4" fill="#f6f6f6" stroke="#c8c8c8" stroke-width="0.5"/><path d="M2.2 4.6 H6.3 L4.25 2.2 Z M2.2 8.4 H6.3 L4.25 10.8 Z" fill="#111"/></svg></div>
<div class="a" style="left:272.6px;top:273.2px;width:13.8px;height:13.8px;border:1px solid #444;background:#fff"><svg width="11.8" height="11.8" viewBox="0 0 12 12" preserveAspectRatio="none" style="position:absolute;left:0;top:0"><circle cx="4.5" cy="7" r="3" fill="none" stroke="#333" stroke-width="1"/><circle cx="7.5" cy="5" r="3" fill="none" stroke="#333" stroke-width="1"/><circle cx="6" cy="6" r="1" fill="none" stroke="#555" stroke-width="0.5"/></svg></div>
<div class="a" style="left:289px;top:273.2px;width:13.8px;height:13.8px;border:1px solid #444;background:#fff"><svg width="11.8" height="11.8" viewBox="0 0 12 12" preserveAspectRatio="none" style="position:absolute;left:0;top:0"><path d="M1.5 6 C4 2.5 8 2.5 10.5 6" fill="none" stroke="#555" stroke-width="0.7"/><path d="M1.5 6 C4 8.5 8 8.5 10.5 6" fill="none" stroke="#444" stroke-width="0.8"/><path d="M3 8 L2 9.5 M5 8.5 L4.5 10 M7 8.5 L7.5 10 M9 8 L10 9.5" stroke="#666" stroke-width="0.4"/></svg></div>
<div class="a" style="left:305px;top:273.2px;width:13.8px;height:13.8px;border:1px solid #444;background:#999"><svg width="11.8" height="11.8" viewBox="0 0 12 12" preserveAspectRatio="none" style="position:absolute;left:0;top:0"><rect x="0" y="0" width="12" height="12" fill="#999"/><rect x="2.5" y="2" width="3.5" height="4" fill="#ccc"/><rect x="6" y="2" width="3.5" height="8" fill="#444"/><rect x="2.5" y="6" width="3.5" height="4" fill="#777"/><path d="M6 0 V1.5 M6 10.5 V12 M0 6 H1.5 M10.5 6 H12" stroke="#111" stroke-width="0.6"/></svg></div>
<div class="a" style="left:322px;top:273.2px;width:13.8px;height:13.8px;border:1px solid #444;background:#aaa"><svg width="11.8" height="11.8" viewBox="0 0 12 12" preserveAspectRatio="none" style="position:absolute;left:0;top:0"><rect x="0" y="0" width="12" height="12" fill="#aaa"/><defs><linearGradient id="mg" x1="0" x2="1"><stop offset="0" stop-color="#dde8f8"/><stop offset="1" stop-color="#2a70d0"/></linearGradient></defs><rect x="2" y="2" width="8" height="5.5" rx="1.5" fill="url(#mg)" stroke="#334" stroke-width="0.5"/><path d="M2.5 9.8 H9.5" stroke="#822" stroke-width="0.6"/><circle cx="2.5" cy="9.8" r="0.6" fill="#822"/><circle cx="9.5" cy="9.8" r="0.6" fill="#822"/></svg></div>
<div class="a" style="left:337px;top:273.2px;width:13.8px;height:13.8px;border:1px solid #444;background:#aaa"><svg width="11.8" height="11.8" viewBox="0 0 12 12" preserveAspectRatio="none" style="position:absolute;left:0;top:0"><rect x="0" y="0" width="12" height="12" fill="#aaa"/><defs><linearGradient id="rb" x1="0" x2="1"><stop offset="0" stop-color="#f00"/><stop offset="0.25" stop-color="#ff0"/><stop offset="0.5" stop-color="#0f0"/><stop offset="0.75" stop-color="#00f"/><stop offset="1" stop-color="#f0f"/></linearGradient><linearGradient id="bw" x1="0" x2="1"><stop offset="0" stop-color="#000"/><stop offset="1" stop-color="#fff"/></linearGradient></defs><rect x="1.5" y="1" width="9" height="3" fill="url(#rb)"/><rect x="1.5" y="4.5" width="9" height="4.5" fill="url(#bw)"/></svg></div>
<div class="a" style="left:352.2px;top:273.2px;width:13.8px;height:13.8px;border:1px solid #444;background:#999"><svg width="11.8" height="11.8" viewBox="0 0 12 12" preserveAspectRatio="none" style="position:absolute;left:0;top:0"><rect x="0" y="0" width="12" height="12" fill="#999"/><path d="M2 0 V12 M4.5 0 V12 M7 0 V12 M9.5 0 V12 M0 2 H12 M0 4.5 H12 M0 7 H12 M0 9.5 H12" stroke="#555" stroke-width="0.5"/></svg></div>
<div class="a" style="left:367.5px;top:274.5px;width:129px;height:12.5px;background:#aaa;border-left:1px solid #ddd;border-top:1px solid #ddd"></div>
<div class="a" style="left:422px;top:275.7px;width:9.4px;height:10.5px;background:#f4f4f4;border-right:0.5px solid #ccc"></div>
<div class="a" style="left:431.4px;top:275.7px;width:9.4px;height:10.5px;background:#f4f4f4"></div>
<div class="a" style="left:497.3px;top:273.4px;width:35.69999999999999px;height:14.3px;background:#fff;border-left:1px solid #c0c0c0;border-top:1px solid #c0c0c0"></div>
<div class="t" style="left:498.5px;top:277.0px;font-size:7px;color:#111">119.53</div>
<div class="a" style="left:535.5px;top:238.5px;width:262px;height:6px;background:#6eb04b"></div>
<svg class="a" style="left:664.3px;top:239.6px" width="6" height="4"><path d="M0.7 3.2 H5.3 L3 0.4 Z" fill="#111"/></svg>
<div class="a" style="left:549.5px;top:257.7px;width:248px;height:1.6px;background:#bcbcbc"></div>
<div class="a" style="left:549.5px;top:272.4px;width:248px;height:1px;background:#d8d8d8"></div>
<div class="a" style="left:536.0px;top:245.0px;width:13.5px;height:13.2px;border:1px solid #333;background:#f6f6f6"><svg width="11.5" height="11.2" viewBox="0 0 12 12" preserveAspectRatio="none" style="position:absolute;left:0;top:0"><path d="M3 2 H9 V9 H3 Z M5 2 V9 M7 2 V9 M3 4.5 H9 M3 7 H9" fill="none" stroke="#444" stroke-width="0.6"/><path d="M6 0.5 V2 M10 5 L11 6 L10 7 M2 9 L1 10" stroke="#333" stroke-width="0.6" fill="none"/><circle cx="3.5" cy="9" r="0.8" fill="#222"/><path d="M9 11 H11.5" stroke="#222" stroke-width="0.7"/></svg></div>
<div class="combo" style="left:551.1px;top:245.3px;width:104px;height:12.4px;border:none;border-left:1px solid #c0c0c0;border-top:1px solid #c0c0c0"></div>
<div class="t" style="left:551.1px;top:249.8px;width:87px;text-align:center;font-size:5.5px;color:#222;-webkit-text-stroke:0.1px #222">Coronal</div>
<div class="a" style="left:641.0px;top:250.2px;width:10px;height:3.4px;border:0.7px solid #b4b4b4;border-radius:0.6px;background:#f2f2f2"></div>
<div class="a" style="left:657.0px;top:245.0px;width:8.5px;height:13px;background:#e0e0e0"><svg width="8.5" height="13" style="position:absolute;left:0;top:0"><rect x="0.6" y="0.6" width="7.3" height="5.4" fill="#f6f6f6" stroke="#c8c8c8" stroke-width="0.5"/><rect x="0.6" y="6.9" width="7.3" height="5.4" fill="#f6f6f6" stroke="#c8c8c8" stroke-width="0.5"/><path d="M2.2 4.6 H6.3 L4.25 2.2 Z M2.2 8.4 H6.3 L4.25 10.8 Z" fill="#111"/></svg></div>
<div class="a" style="left:666.5px;top:245.0px;width:13.5px;height:13.2px;border:1px solid #333;background:#f6f6f6"><svg width="11.5" height="11.2" viewBox="0 0 12 12" preserveAspectRatio="none" style="position:absolute;left:0;top:0"><path d="M2 4 L4.5 1.5 H10 V8 L7.5 10.5 H2 Z" fill="#c8c8c8" stroke="#888" stroke-width="0.4"/><rect x="3.5" y="1.5" width="6.5" height="6.5" fill="#f0b830" stroke="#604010" stroke-width="0.5"/><text x="6.7" y="6.8" font-size="5.5" font-family="Liberation Sans" text-anchor="middle" fill="#332200">f</text><path d="M9.5 11 L11.5 11 L10.5 12 Z" fill="#222"/></svg></div>
<div class="combo" style="left:682.5px;top:245.3px;width:103.5px;height:12.4px;border:none;border-left:1px solid #c0c0c0;border-top:1px solid #c0c0c0"></div>
<div class="t" style="left:682.5px;top:249.8px;width:88px;text-align:center;font-size:5.5px;color:#222;-webkit-text-stroke:0.1px #222">target_t2</div>
<div class="a" style="left:772.5px;top:250.2px;width:10px;height:3.4px;border:0.7px solid #b4b4b4;border-radius:0.6px;background:#f2f2f2"></div>
<div class="a" style="left:788.3px;top:245.0px;width:8.5px;height:13px;background:#e0e0e0"><svg width="8.5" height="13" style="position:absolute;left:0;top:0"><rect x="0.6" y="0.6" width="7.3" height="5.4" fill="#f6f6f6" stroke="#c8c8c8" stroke-width="0.5"/><rect x="0.6" y="6.9" width="7.3" height="5.4" fill="#f6f6f6" stroke="#c8c8c8" stroke-width="0.5"/><path d="M2.2 4.6 H6.3 L4.25 2.2 Z M2.2 8.4 H6.3 L4.25 10.8 Z" fill="#111"/></svg></div>
<div class="a" style="left:536.0px;top:259.3px;width:13.5px;height:13.2px;border:1px solid #333;background:#f6f6f6"><svg width="11.5" height="11.2" viewBox="0 0 12 12" preserveAspectRatio="none" style="position:absolute;left:0;top:0"><path d="M2 4 L4.5 1.5 H10 V8 L7.5 10.5 H2 Z" fill="#c8c8c8" stroke="#888" stroke-width="0.4"/><rect x="1" y="4" width="6.5" height="6.5" fill="#f0b830" stroke="#604010" stroke-width="0.5"/><text x="4.2" y="9.3" font-size="5.5" font-family="Liberation Sans" text-anchor="middle" fill="#332200">L</text><path d="M9.5 11 L11.5 11 L10.5 12 Z" fill="#222"/></svg></div>
<div class="combo" style="left:551.1px;top:259.6px;width:104px;height:12.4px;border:none;border-left:1px solid #c0c0c0;border-top:1px solid #c0c0c0"></div>
<div class="t" style="left:551.1px;top:264.1px;width:87px;text-align:center;font-size:5.5px;color:#222;-webkit-text-stroke:0.1px #222">None</div>
<div class="a" style="left:641.0px;top:264.5px;width:10px;height:3.4px;border:0.7px solid #b4b4b4;border-radius:0.6px;background:#f2f2f2"></div>
<div class="a" style="left:657.0px;top:259.3px;width:8.5px;height:13px;background:#e0e0e0"><svg width="8.5" height="13" style="position:absolute;left:0;top:0"><rect x="0.6" y="0.6" width="7.3" height="5.4" fill="#f6f6f6" stroke="#c8c8c8" stroke-width="0.5"/><rect x="0.6" y="6.9" width="7.3" height="5.4" fill="#f6f6f6" stroke="#c8c8c8" stroke-width="0.5"/><path d="M2.2 4.6 H6.3 L4.25 2.2 Z M2.2 8.4 H6.3 L4.25 10.8 Z" fill="#111"/></svg></div>
<div class="a" style="left:666.5px;top:259.3px;width:13.5px;height:13.2px;border:1px solid #333;background:#f6f6f6"><svg width="11.5" height="11.2" viewBox="0 0 12 12" preserveAspectRatio="none" style="position:absolute;left:0;top:0"><path d="M2 4 L4.5 1.5 H10 V8 L7.5 10.5 H2 Z" fill="#c8c8c8" stroke="#888" stroke-width="0.4"/><rect x="3.5" y="1.5" width="6.5" height="6.5" fill="#f0b830" stroke="#604010" stroke-width="0.5"/><text x="6.7" y="6.8" font-size="5.5" font-family="Liberation Sans" text-anchor="middle" fill="#332200">B</text><path d="M9.5 11 L11.5 11 L10.5 12 Z" fill="#222"/></svg></div>
<div class="combo" style="left:682.5px;top:259.6px;width:103.5px;height:12.4px;border:none;border-left:1px solid #c0c0c0;border-top:1px solid #c0c0c0"></div>
<div class="t" style="left:682.5px;top:264.1px;width:88px;text-align:center;font-size:5.5px;color:#222;-webkit-text-stroke:0.1px #222">target_t1</div>
<div class="a" style="left:772.5px;top:264.5px;width:10px;height:3.4px;border:0.7px solid #b4b4b4;border-radius:0.6px;background:#f2f2f2"></div>
<div class="a" style="left:788.3px;top:259.3px;width:8.5px;height:13px;background:#e0e0e0"><svg width="8.5" height="13" style="position:absolute;left:0;top:0"><rect x="0.6" y="0.6" width="7.3" height="5.4" fill="#f6f6f6" stroke="#c8c8c8" stroke-width="0.5"/><rect x="0.6" y="6.9" width="7.3" height="5.4" fill="#f6f6f6" stroke="#c8c8c8" stroke-width="0.5"/><path d="M2.2 4.6 H6.3 L4.25 2.2 Z M2.2 8.4 H6.3 L4.25 10.8 Z" fill="#111"/></svg></div>
<div class="a" style="left:537.1px;top:273.2px;width:13.8px;height:13.8px;border:1px solid #444;background:#fff"><svg width="11.8" height="11.8" viewBox="0 0 12 12" preserveAspectRatio="none" style="position:absolute;left:0;top:0"><circle cx="4.5" cy="7" r="3" fill="none" stroke="#333" stroke-width="1"/><circle cx="7.5" cy="5" r="3" fill="none" stroke="#333" stroke-width="1"/><circle cx="6" cy="6" r="1" fill="none" stroke="#555" stroke-width="0.5"/></svg></div>
<div class="a" style="left:553.5px;top:273.2px;width:13.8px;height:13.8px;border:1px solid #444;background:#fff"><svg width="11.8" height="11.8" viewBox="0 0 12 12" preserveAspectRatio="none" style="position:absolute;left:0;top:0"><path d="M1.5 6 C4 2.5 8 2.5 10.5 6" fill="none" stroke="#555" stroke-width="0.7"/><path d="M1.5 6 C4 8.5 8 8.5 10.5 6" fill="none" stroke="#444" stroke-width="0.8"/><path d="M3 8 L2 9.5 M5 8.5 L4.5 10 M7 8.5 L7.5 10 M9 8 L10 9.5" stroke="#666" stroke-width="0.4"/></svg></div>
<div class="a" style="left:569.5px;top:273.2px;width:13.8px;height:13.8px;border:1px solid #444;background:#999"><svg width="11.8" height="11.8" viewBox="0 0 12 12" preserveAspectRatio="none" style="position:absolute;left:0;top:0"><rect x="0" y="0" width="12" height="12" fill="#999"/><rect x="2.5" y="2" width="3.5" height="4" fill="#ccc"/><rect x="6" y="2" width="3.5" height="8" fill="#444"/><rect x="2.5" y="6" width="3.5" height="4" fill="#777"/><path d="M6 0 V1.5 M6 10.5 V12 M0 6 H1.5 M10.5 6 H12" stroke="#111" stroke-width="0.6"/></svg></div>
<div class="a" style="left:586.5px;top:273.2px;width:13.8px;height:13.8px;border:1px solid #444;background:#aaa"><svg width="11.8" height="11.8" viewBox="0 0 12 12" preserveAspectRatio="none" style="position:absolute;left:0;top:0"><rect x="0" y="0" width="12" height="12" fill="#aaa"/><defs><linearGradient id="mg" x1="0" x2="1"><stop offset="0" stop-color="#dde8f8"/><stop offset="1" stop-color="#2a70d0"/></linearGradient></defs><rect x="2" y="2" width="8" height="5.5" rx="1.5" fill="url(#mg)" stroke="#334" stroke-width="0.5"/><path d="M2.5 9.8 H9.5" stroke="#822" stroke-width="0.6"/><circle cx="2.5" cy="9.8" r="0.6" fill="#822"/><circle cx="9.5" cy="9.8" r="0.6" fill="#822"/></svg></div>
<div class="a" style="left:601.5px;top:273.2px;width:13.8px;height:13.8px;border:1px solid #444;background:#aaa"><svg width="11.8" height="11.8" viewBox="0 0 12 12" preserveAspectRatio="none" style="position:absolute;left:0;top:0"><rect x="0" y="0" width="12" height="12" fill="#aaa"/><defs><linearGradient id="rb" x1="0" x2="1"><stop offset="0" stop-color="#f00"/><stop offset="0.25" stop-color="#ff0"/><stop offset="0.5" stop-color="#0f0"/><stop offset="0.75" stop-color="#00f"/><stop offset="1" stop-color="#f0f"/></linearGradient><linearGradient id="bw" x1="0" x2="1"><stop offset="0" stop-color="#000"/><stop offset="1" stop-color="#fff"/></linearGradient></defs><rect x="1.5" y="1" width="9" height="3" fill="url(#rb)"/><rect x="1.5" y="4.5" width="9" height="4.5" fill="url(#bw)"/></svg></div>
<div class="a" style="left:616.7px;top:273.2px;width:13.8px;height:13.8px;border:1px solid #444;background:#999"><svg width="11.8" height="11.8" viewBox="0 0 12 12" preserveAspectRatio="none" style="position:absolute;left:0;top:0"><rect x="0" y="0" width="12" height="12" fill="#999"/><path d="M2 0 V12 M4.5 0 V12 M7 0 V12 M9.5 0 V12 M0 2 H12 M0 4.5 H12 M0 7 H12 M0 9.5 H12" stroke="#555" stroke-width="0.5"/></svg></div>
<div class="a" style="left:632.0px;top:274.5px;width:129px;height:12.5px;background:#aaa;border-left:1px solid #ddd;border-top:1px solid #ddd"></div>
<div class="a" style="left:687.0px;top:275.7px;width:9.4px;height:10.5px;background:#f4f4f4;border-right:0.5px solid #ccc"></div>
<div class="a" style="left:696.4px;top:275.7px;width:9.4px;height:10.5px;background:#f4f4f4"></div>
<div class="a" style="left:761.8px;top:273.4px;width:35.69999999999999px;height:14.3px;background:#fff;border-left:1px solid #c0c0c0;border-top:1px solid #c0c0c0"></div>
<div class="t" style="left:763.0px;top:277.0px;font-size:7px;color:#111">92.25</div>
<!-- bottom lines -->
<div class="a" style="left:284.3px;top:433.9px;width:515px;height:2px;background:#b4b4b4"></div>
<svg class="a" style="left:272px;top:433px" width="12" height="4"><path d="M0.5 0.5 L1.8 2 L3 0.5" fill="none" stroke="#999" stroke-width="0.7"/><path d="M7 2.8 H10.5 L8.75 0.6 Z" fill="#222"/></svg>
<div class="a" style="left:269.5px;top:44px;width:2.5px;height:387.5px;background:linear-gradient(90deg,#fff,#d0d0d0)"></div>
<div class="a" style="left:2px;top:437.8px;width:798px;height:1.3px;background:#b0b0b0"></div>
<div class="a" style="left:681px;top:441px;width:103px;height:14px;border:1px solid #c0c0c0;border-right-color:#e0e0e0;border-bottom-color:#e0e0e0;background:#fff"></div>
<svg class="a" style="left:785px;top:442px" width="12" height="12" viewBox="0 0 12 12"><circle cx="5.5" cy="5.5" r="5" fill="#e01818" stroke="#901010" stroke-width="0.5"/><path d="M3.2 3.2 L7.8 7.8 M7.8 3.2 L3.2 7.8" stroke="#fff" stroke-width="1.5"/></svg>
</body></html>
